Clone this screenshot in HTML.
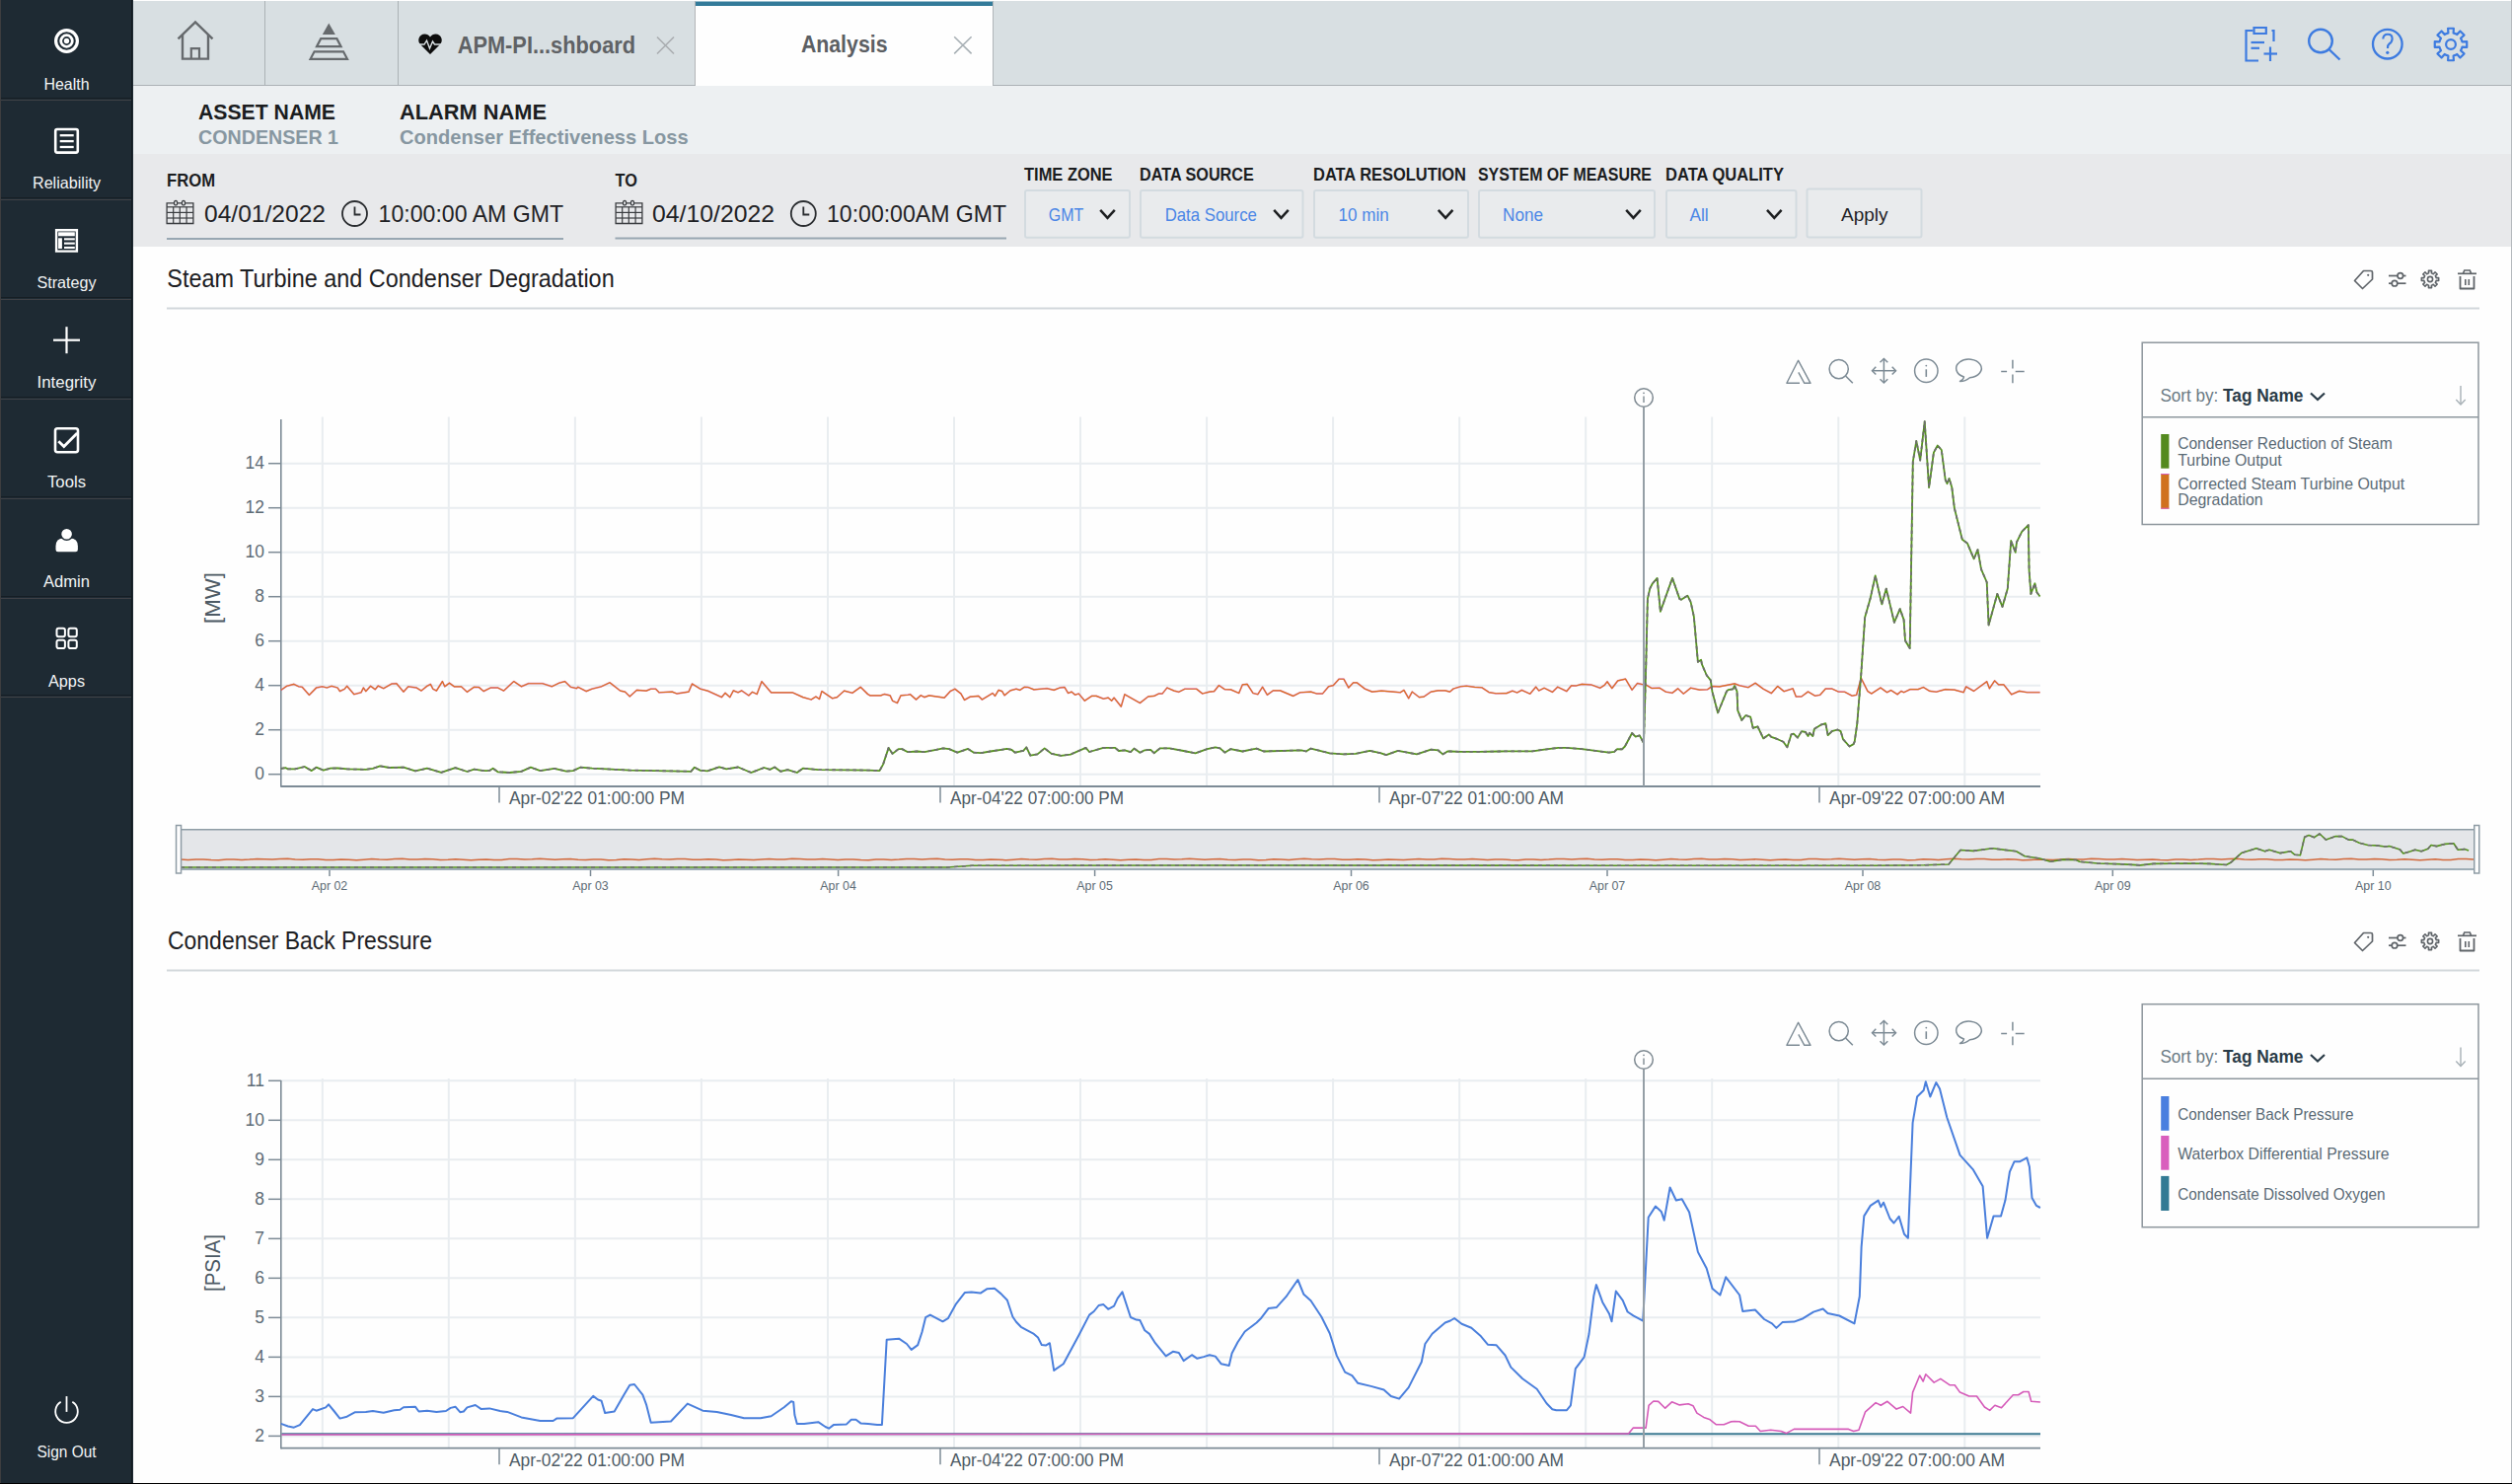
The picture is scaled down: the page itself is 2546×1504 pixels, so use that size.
<!DOCTYPE html>
<html><head><meta charset="utf-8"><title>Analysis</title>
<style>
html,body{margin:0;padding:0;background:#fefefe;overflow:hidden;}
body{width:2546px;height:1504px;position:relative;font-family:"Liberation Sans", sans-serif;}
svg{position:absolute;left:0;top:0;display:block;}
svg text{font-family:"Liberation Sans", sans-serif;}
</style></head>
<body>
<svg width="2546" height="1504" viewBox="0 0 2546 1504">
<rect x="0" y="0" width="2546" height="1504" fill="#fefefe"/>
<rect x="135" y="1" width="2410" height="85" fill="#d8dfe2"/>
<line x1="135" y1="86.5" x2="2545" y2="86.5" stroke="#acb2b6" stroke-width="1"/>
<rect x="135" y="87" width="2410" height="69" fill="#edf0f2"/>
<rect x="135" y="156" width="2410" height="94" fill="#e8e9eb"/>
<rect x="0" y="0" width="135" height="1504" fill="#1e2a33"/>
<line x1="0.5" y1="0" x2="0.5" y2="1504" stroke="#3d3d3f" stroke-width="1"/>
<line x1="133.5" y1="0" x2="133.5" y2="1504" stroke="#121a20" stroke-width="1"/>
<line x1="1" y1="99.5" x2="133" y2="99.5" stroke="#161e24" stroke-width="1"/>
<line x1="1" y1="101.5" x2="133" y2="101.5" stroke="#3f4146" stroke-width="1"/>
<line x1="1" y1="200.5" x2="133" y2="200.5" stroke="#161e24" stroke-width="1"/>
<line x1="1" y1="202.5" x2="133" y2="202.5" stroke="#3f4146" stroke-width="1"/>
<line x1="1" y1="301.5" x2="133" y2="301.5" stroke="#161e24" stroke-width="1"/>
<line x1="1" y1="303.5" x2="133" y2="303.5" stroke="#3f4146" stroke-width="1"/>
<line x1="1" y1="402.5" x2="133" y2="402.5" stroke="#161e24" stroke-width="1"/>
<line x1="1" y1="404.5" x2="133" y2="404.5" stroke="#3f4146" stroke-width="1"/>
<line x1="1" y1="503.5" x2="133" y2="503.5" stroke="#161e24" stroke-width="1"/>
<line x1="1" y1="505.5" x2="133" y2="505.5" stroke="#3f4146" stroke-width="1"/>
<line x1="1" y1="604.5" x2="133" y2="604.5" stroke="#161e24" stroke-width="1"/>
<line x1="1" y1="606.5" x2="133" y2="606.5" stroke="#3f4146" stroke-width="1"/>
<line x1="1" y1="704.5" x2="133" y2="704.5" stroke="#161e24" stroke-width="1"/>
<line x1="1" y1="706.5" x2="133" y2="706.5" stroke="#3f4146" stroke-width="1"/>
<line x1="2545.5" y1="0" x2="2545.5" y2="1504" stroke="#b5b9bd" stroke-width="1"/>
<line x1="0" y1="1503.5" x2="2546" y2="1503.5" stroke="#000000" stroke-width="1"/>
<text x="67.5" y="90.6" font-size="16.5" fill="#f2f4f5" text-anchor="middle" textLength="46.0" lengthAdjust="spacingAndGlyphs">Health</text>
<text x="67.5" y="191.4" font-size="16.5" fill="#f2f4f5" text-anchor="middle" textLength="69.0" lengthAdjust="spacingAndGlyphs">Reliability</text>
<text x="67.5" y="292.3" font-size="16.5" fill="#f2f4f5" text-anchor="middle" textLength="60.0" lengthAdjust="spacingAndGlyphs">Strategy</text>
<text x="67.5" y="393.1" font-size="16.5" fill="#f2f4f5" text-anchor="middle" textLength="60.0" lengthAdjust="spacingAndGlyphs">Integrity</text>
<text x="67.5" y="493.9" font-size="16.5" fill="#f2f4f5" text-anchor="middle" textLength="39.0" lengthAdjust="spacingAndGlyphs">Tools</text>
<text x="67.5" y="594.8" font-size="16.5" fill="#f2f4f5" text-anchor="middle" textLength="47.0" lengthAdjust="spacingAndGlyphs">Admin</text>
<text x="67.5" y="695.6" font-size="16.5" fill="#f2f4f5" text-anchor="middle" textLength="37.0" lengthAdjust="spacingAndGlyphs">Apps</text>
<circle cx="67.5" cy="41.5" r="10.9" stroke="#fff" stroke-width="3.2" fill="none"/>
<circle cx="67.5" cy="41.5" r="5.8" stroke="#fff" stroke-width="2.8" fill="none"/>
<circle cx="67.5" cy="41.5" r="2.7" stroke="none" stroke-width="1" fill="#fff"/>
<path d="M58.0,131.0 h19 a1.8,1.8 0 0 1 1.8,1.8 v20 a1.8,1.8 0 0 1 -1.8,1.8 h-19 a1.8,1.8 0 0 1 -1.8,-1.8 v-20 a1.8,1.8 0 0 1 1.8,-1.8 z" stroke="#fff" stroke-width="2.6" fill="none"/>
<line x1="60.7" y1="137.20000000000002" x2="74.7" y2="137.20000000000002" stroke="#fff" stroke-width="2.3"/>
<line x1="60.7" y1="143.10000000000002" x2="74.7" y2="143.10000000000002" stroke="#fff" stroke-width="2.3"/>
<line x1="60.7" y1="149.0" x2="74.7" y2="149.0" stroke="#fff" stroke-width="2.3"/>
<path d="M57.1,233.3 H77.9 V254.6 H57.1 Z" stroke="#fff" stroke-width="2.4" fill="none"/>
<rect x="59.1" y="235.3" width="16.7" height="4" fill="#fff"/>
<rect x="59.1" y="241.3" width="3.8" height="10.7" fill="#fff"/>
<rect x="65" y="241.3" width="10.8" height="2.1" fill="#fff"/>
<rect x="65" y="245.6" width="10.8" height="2.1" fill="#fff"/>
<rect x="65" y="249.9" width="10.8" height="2.1" fill="#fff"/>
<line x1="54.0" y1="344.7" x2="81.0" y2="344.7" stroke="#fff" stroke-width="2.2"/>
<line x1="67.5" y1="331.2" x2="67.5" y2="358.2" stroke="#fff" stroke-width="2.2"/>
<path d="M58.2,434.2 H76.8 A2.2,2.2 0 0 1 79,436.4 V456 A2.2,2.2 0 0 1 76.8,458.2 H58.2 A2.2,2.2 0 0 1 56,456 V436.4 A2.2,2.2 0 0 1 58.2,434.2 Z" stroke="#fff" stroke-width="2.6" fill="none"/>
<path d="M59.3,447.3 L64.8,452.6 L78.2,439" stroke="#fff" stroke-width="2.8" fill="none"/>
<path d="M56.5,557 V553.5 Q56.5,545.5 64.5,545.5 H70.9 Q78.9,545.5 78.9,553.5 V557 Q78.9,559.3 76.6,559.3 H58.8 Q56.5,559.3 56.5,557 Z" stroke="none" stroke-width="1" fill="#fff"/>
<circle cx="67.6" cy="541.2" r="6.1" stroke="#1e2a33" stroke-width="1.6" fill="#fff"/>
<path d="M59.400000000000006,636.8 h4.6 a1.9,1.9 0 0 1 1.9,1.9 v4.6 a1.9,1.9 0 0 1 -1.9,1.9 h-4.6 a1.9,1.9 0 0 1 -1.9,-1.9 v-4.6 a1.9,1.9 0 0 1 1.9,-1.9 z" stroke="#fff" stroke-width="2" fill="none"/>
<path d="M59.400000000000006,648.6999999999999 h4.6 a1.9,1.9 0 0 1 1.9,1.9 v4.6 a1.9,1.9 0 0 1 -1.9,1.9 h-4.6 a1.9,1.9 0 0 1 -1.9,-1.9 v-4.6 a1.9,1.9 0 0 1 1.9,-1.9 z" stroke="#fff" stroke-width="2" fill="none"/>
<path d="M71.3,636.8 h4.6 a1.9,1.9 0 0 1 1.9,1.9 v4.6 a1.9,1.9 0 0 1 -1.9,1.9 h-4.6 a1.9,1.9 0 0 1 -1.9,-1.9 v-4.6 a1.9,1.9 0 0 1 1.9,-1.9 z" stroke="#fff" stroke-width="2" fill="none"/>
<path d="M71.3,648.6999999999999 h4.6 a1.9,1.9 0 0 1 1.9,1.9 v4.6 a1.9,1.9 0 0 1 -1.9,1.9 h-4.6 a1.9,1.9 0 0 1 -1.9,-1.9 v-4.6 a1.9,1.9 0 0 1 1.9,-1.9 z" stroke="#fff" stroke-width="2" fill="none"/>
<path d="M61.7,1420.8 A11.3,11.3 0 1 0 73.3,1420.8" stroke="#fff" stroke-width="1.8" fill="none"/>
<line x1="67.5" y1="1415.1" x2="67.5" y2="1430.8999999999999" stroke="#fff" stroke-width="1.8"/>
<text x="67.5" y="1477.0" font-size="16.5" fill="#f2f4f5" text-anchor="middle" textLength="60.0" lengthAdjust="spacingAndGlyphs">Sign Out</text>
<line x1="268.5" y1="1" x2="268.5" y2="86" stroke="#acb2b6" stroke-width="1"/>
<line x1="403.5" y1="1" x2="403.5" y2="86" stroke="#acb2b6" stroke-width="1"/>
<line x1="704.5" y1="1" x2="704.5" y2="86" stroke="#b3b4b7" stroke-width="1"/>
<rect x="705" y="1" width="301" height="86" fill="#fefefe"/>
<rect x="705" y="1.5" width="301" height="4.5" fill="#337b9a"/>
<line x1="1006.5" y1="1" x2="1006.5" y2="86" stroke="#b0b5b8" stroke-width="1"/>
<path d="M180.5,39.3 L198,22.3 L215.5,39.3" stroke="#666a6d" stroke-width="2.4" fill="none"/>
<path d="M185,35 V59.6 H211 V35" stroke="#666a6d" stroke-width="2.4" fill="none"/>
<path d="M193.8,59.6 V49.2 H202 V59.6" stroke="#666a6d" stroke-width="2.2" fill="none"/>
<path d="M333.3,23.6 L339.8,34.9 H326.8 Z" stroke="none" stroke-width="1" fill="#666a6d"/>
<path d="M325.2,39.2 H341.4 L345.6,47.2 H321 Z" stroke="#666a6d" stroke-width="2.2" fill="none"/>
<path d="M318.6,52.3 H348 L352,59.8 H314.6 Z" stroke="#666a6d" stroke-width="2.2" fill="none"/>
<path d="M436,55 L426.5,45.5 Q423.5,42.5 424.5,39 Q426,34.5 430.5,34.5 Q434,34.5 436,37.5 Q438,34.5 441.5,34.5 Q446,34.5 447.5,39 Q448.5,42.5 445.5,45.5 Z" stroke="none" stroke-width="1" fill="#0d0d0d"/>
<path d="M425,45 H430 L432.5,41 L435.5,49 L438.5,42 L440.5,45 H447" stroke="#d8dfe2" stroke-width="1.4" fill="none"/>
<text x="463.7" y="53.5" font-size="23.5" fill="#5f6265" font-weight="bold" textLength="180.4" lengthAdjust="spacingAndGlyphs">APM-PI...shboard</text>
<path d="M666,37.5 L683,54.5 M683,37.5 L666,54.5" stroke="#a9adb0" stroke-width="1.6" fill="none"/>
<text x="811.9" y="53.3" font-size="23.5" fill="#5c5f63" font-weight="bold" textLength="87.6" lengthAdjust="spacingAndGlyphs">Analysis</text>
<path d="M967.2,37.3 L984.6,54.4 M984.6,37.3 L967.2,54.4" stroke="#a8b0b5" stroke-width="1.6" fill="none"/>
<path d="M2283.5,31 H2276.5 V61.5 H2289" stroke="#3d7be0" stroke-width="2.2" fill="none"/>
<path d="M2302.5,31 H2304.5 V42" stroke="#3d7be0" stroke-width="2.2" fill="none"/>
<path d="M2284.5,28 H2296.8 V34 H2284.5 Z" stroke="#3d7be0" stroke-width="2.2" fill="none"/>
<line x1="2281.5" y1="43" x2="2295" y2="43" stroke="#3d7be0" stroke-width="2.2"/>
<line x1="2281.5" y1="48.8" x2="2290" y2="48.8" stroke="#3d7be0" stroke-width="2.2"/>
<line x1="2294.5" y1="54.5" x2="2308" y2="54.5" stroke="#3d7be0" stroke-width="2.2"/>
<line x1="2301" y1="47.5" x2="2301" y2="62" stroke="#3d7be0" stroke-width="2.2"/>
<circle cx="2352" cy="41.5" r="11.8" stroke="#3d7be0" stroke-width="2.4" fill="none"/>
<line x1="2360.5" y1="50" x2="2371.5" y2="60.5" stroke="#3d7be0" stroke-width="2.4"/>
<circle cx="2419.8" cy="44.7" r="14.8" stroke="#3d7be0" stroke-width="2.3" fill="none"/>
<path d="M2415.3,39.5 Q2415.5,34.8 2420,34.8 Q2424.6,34.8 2424.6,39.2 Q2424.6,42.5 2421.5,44.5 Q2420,45.5 2420,49" stroke="#3d7be0" stroke-width="2.1" fill="none"/>
<circle cx="2419.8" cy="53.3" r="1.6" stroke="none" stroke-width="1" fill="#3d7be0"/>
<path d="M2479.48,34.10 L2481.38,33.49 L2481.10,28.76 L2486.90,28.76 L2486.62,33.49 L2488.52,34.10 L2490.28,35.01 L2493.43,31.46 L2497.54,35.57 L2493.99,38.72 L2494.90,40.48 L2495.51,42.38 L2500.24,42.10 L2500.24,47.90 L2495.51,47.62 L2494.90,49.52 L2493.99,51.28 L2497.54,54.43 L2493.43,58.54 L2490.28,54.99 L2488.52,55.90 L2486.62,56.51 L2486.90,61.24 L2481.10,61.24 L2481.38,56.51 L2479.48,55.90 L2477.72,54.99 L2474.57,58.54 L2470.46,54.43 L2474.01,51.28 L2473.10,49.52 L2472.49,47.62 L2467.76,47.90 L2467.76,42.10 L2472.49,42.38 L2473.10,40.48 L2474.01,38.72 L2470.46,35.57 L2474.57,31.46 L2477.72,35.01 Z" stroke="#3d7be0" stroke-width="2.2" fill="none" stroke-linejoin="round"/>
<circle cx="2484" cy="45" r="4.9" stroke="#3d7be0" stroke-width="2.2" fill="none"/>
<text x="201.0" y="120.8" font-size="22.5" fill="#1b1d1f" font-weight="bold" textLength="139.0" lengthAdjust="spacingAndGlyphs">ASSET NAME</text>
<text x="201.0" y="146.0" font-size="21" fill="#8797a1" font-weight="bold" textLength="142.0" lengthAdjust="spacingAndGlyphs">CONDENSER 1</text>
<text x="405.0" y="120.8" font-size="22.5" fill="#1b1d1f" font-weight="bold" textLength="149.0" lengthAdjust="spacingAndGlyphs">ALARM NAME</text>
<text x="405.0" y="146.0" font-size="21" fill="#8797a1" font-weight="bold" textLength="292.7" lengthAdjust="spacingAndGlyphs">Condenser Effectiveness Loss</text>
<text x="169.0" y="189.0" font-size="18" fill="#1b1d1f" font-weight="bold" textLength="49.0" lengthAdjust="spacingAndGlyphs">FROM</text>
<path d="M169.1,205.9 H195.9 V226.5 H169.1 Z" stroke="#3a3d40" stroke-width="1.3" fill="none"/>
<line x1="169.1" y1="209.8" x2="195.9" y2="209.8" stroke="#3a3d40" stroke-width="1.2"/>
<line x1="169.1" y1="215.4" x2="195.9" y2="215.4" stroke="#3a3d40" stroke-width="1.2"/>
<line x1="169.1" y1="221.0" x2="195.9" y2="221.0" stroke="#3a3d40" stroke-width="1.2"/>
<line x1="175.7" y1="209.8" x2="175.7" y2="226.5" stroke="#3a3d40" stroke-width="1.2"/>
<line x1="182.3" y1="209.8" x2="182.3" y2="226.5" stroke="#3a3d40" stroke-width="1.2"/>
<line x1="189.1" y1="209.8" x2="189.1" y2="226.5" stroke="#3a3d40" stroke-width="1.2"/>
<ellipse cx="178.1" cy="205.7" rx="1.6" ry="2.3" stroke="#3a3d40" stroke-width="1.2" fill="#e8e9eb"/>
<ellipse cx="186.0" cy="205.7" rx="1.6" ry="2.3" stroke="#3a3d40" stroke-width="1.2" fill="#e8e9eb"/>
<text x="207.0" y="224.7" font-size="24.3" fill="#1f2225" textLength="123.0" lengthAdjust="spacingAndGlyphs">04/01/2022</text>
<circle cx="359.5" cy="216.5" r="12.5" stroke="#2a2d30" stroke-width="1.8" fill="none"/>
<path d="M359.5,209.5 V217.5 H365.5" stroke="#2a2d30" stroke-width="1.8" fill="none"/>
<text x="383.6" y="224.7" font-size="24.3" fill="#1f2225" textLength="187.4" lengthAdjust="spacingAndGlyphs">10:00:00 AM GMT</text>
<line x1="169" y1="242" x2="571" y2="242" stroke="#98a7b2" stroke-width="2"/>
<text x="623.5" y="189.0" font-size="18" fill="#1b1d1f" font-weight="bold" textLength="22.4" lengthAdjust="spacingAndGlyphs">TO</text>
<path d="M624.1,205.9 H650.9 V226.5 H624.1 Z" stroke="#3a3d40" stroke-width="1.3" fill="none"/>
<line x1="624.1" y1="209.8" x2="650.9" y2="209.8" stroke="#3a3d40" stroke-width="1.2"/>
<line x1="624.1" y1="215.4" x2="650.9" y2="215.4" stroke="#3a3d40" stroke-width="1.2"/>
<line x1="624.1" y1="221.0" x2="650.9" y2="221.0" stroke="#3a3d40" stroke-width="1.2"/>
<line x1="630.7" y1="209.8" x2="630.7" y2="226.5" stroke="#3a3d40" stroke-width="1.2"/>
<line x1="637.3" y1="209.8" x2="637.3" y2="226.5" stroke="#3a3d40" stroke-width="1.2"/>
<line x1="644.1" y1="209.8" x2="644.1" y2="226.5" stroke="#3a3d40" stroke-width="1.2"/>
<ellipse cx="633.1" cy="205.7" rx="1.6" ry="2.3" stroke="#3a3d40" stroke-width="1.2" fill="#e8e9eb"/>
<ellipse cx="641.0" cy="205.7" rx="1.6" ry="2.3" stroke="#3a3d40" stroke-width="1.2" fill="#e8e9eb"/>
<text x="661.0" y="224.7" font-size="24.3" fill="#1f2225" textLength="124.0" lengthAdjust="spacingAndGlyphs">04/10/2022</text>
<circle cx="814.3" cy="216.5" r="12.5" stroke="#2a2d30" stroke-width="1.8" fill="none"/>
<path d="M814.3,209.5 V217.5 H820.3" stroke="#2a2d30" stroke-width="1.8" fill="none"/>
<text x="838.0" y="224.7" font-size="24.3" fill="#1f2225" textLength="182.0" lengthAdjust="spacingAndGlyphs">10:00:00AM GMT</text>
<line x1="623.5" y1="241.5" x2="1020" y2="241.5" stroke="#98a7b2" stroke-width="2"/>
<text x="1038.0" y="182.9" font-size="18" fill="#1b1d1f" font-weight="bold" textLength="89.6" lengthAdjust="spacingAndGlyphs">TIME ZONE</text>
<rect x="1039" y="193" width="106" height="47.8" rx="2" fill="#e9ebed" stroke="#d3dbe0" stroke-width="2"/>
<text x="1062.8" y="223.9" font-size="19" fill="#4a86e6" textLength="35.5" lengthAdjust="spacingAndGlyphs">GMT</text>
<path d="M1115.2,212.8 L1122.5,220.8 L1129.8,212.8" stroke="#1d1f21" stroke-width="2.5" fill="none"/>
<text x="1155.0" y="182.9" font-size="18" fill="#1b1d1f" font-weight="bold" textLength="115.8" lengthAdjust="spacingAndGlyphs">DATA SOURCE</text>
<rect x="1156" y="193" width="164.5" height="47.8" rx="2" fill="#e9ebed" stroke="#d3dbe0" stroke-width="2"/>
<text x="1180.7" y="223.9" font-size="19" fill="#4a86e6" textLength="93.2" lengthAdjust="spacingAndGlyphs">Data Source</text>
<path d="M1291.2,212.8 L1298.5,220.8 L1305.8,212.8" stroke="#1d1f21" stroke-width="2.5" fill="none"/>
<text x="1331.0" y="182.9" font-size="18" fill="#1b1d1f" font-weight="bold" textLength="155.0" lengthAdjust="spacingAndGlyphs">DATA RESOLUTION</text>
<rect x="1332" y="193" width="156" height="47.8" rx="2" fill="#e9ebed" stroke="#d3dbe0" stroke-width="2"/>
<text x="1356.5" y="223.9" font-size="19" fill="#4a86e6" textLength="51.2" lengthAdjust="spacingAndGlyphs">10 min</text>
<path d="M1457.8,212.8 L1465.1,220.8 L1472.3999999999999,212.8" stroke="#1d1f21" stroke-width="2.5" fill="none"/>
<text x="1498.0" y="182.9" font-size="18" fill="#1b1d1f" font-weight="bold" textLength="176.0" lengthAdjust="spacingAndGlyphs">SYSTEM OF MEASURE</text>
<rect x="1499" y="193" width="178" height="47.8" rx="2" fill="#e9ebed" stroke="#d3dbe0" stroke-width="2"/>
<text x="1523.0" y="223.9" font-size="19" fill="#4a86e6" textLength="41.0" lengthAdjust="spacingAndGlyphs">None</text>
<path d="M1648.2,212.8 L1655.5,220.8 L1662.8,212.8" stroke="#1d1f21" stroke-width="2.5" fill="none"/>
<text x="1688.0" y="182.9" font-size="18" fill="#1b1d1f" font-weight="bold" textLength="120.0" lengthAdjust="spacingAndGlyphs">DATA QUALITY</text>
<rect x="1689" y="193" width="131.5" height="47.8" rx="2" fill="#e9ebed" stroke="#d3dbe0" stroke-width="2"/>
<text x="1712.5" y="223.9" font-size="19" fill="#4a86e6" textLength="19.2" lengthAdjust="spacingAndGlyphs">All</text>
<path d="M1791,212.8 L1798.3,220.8 L1805.6,212.8" stroke="#1d1f21" stroke-width="2.5" fill="none"/>
<rect x="1831.5" y="191.5" width="116" height="49" rx="2" fill="#e9ebed" stroke="#d3dbe0" stroke-width="2"/>
<text x="1866.0" y="223.8" font-size="19" fill="#1f2225" textLength="47.5" lengthAdjust="spacingAndGlyphs">Apply</text>
<text x="169.3" y="291.2" font-size="25" fill="#1d2023" textLength="453.4" lengthAdjust="spacingAndGlyphs">Steam Turbine and Condenser Degradation</text>
<line x1="169" y1="312.5" x2="2513" y2="312.5" stroke="#d2d7db" stroke-width="2"/>
<path d="M2395.5,274.5 H2403 Q2404.5,274.5 2404.5,276 V283 L2394.5,292.5 L2386.5,284.5 Z" stroke="#5f6469" stroke-width="1.7" fill="none" stroke-linejoin="round"/>
<circle cx="2400.2" cy="278.8" r="1.1" stroke="none" stroke-width="1" fill="#5f6469"/>
<line x1="2421" y1="279.5" x2="2438.5" y2="279.5" stroke="#5f6469" stroke-width="1.7"/>
<line x1="2421" y1="287.2" x2="2438.5" y2="287.2" stroke="#5f6469" stroke-width="1.7"/>
<circle cx="2432.8" cy="279.5" r="2.8" stroke="#5f6469" stroke-width="1.7" fill="#fefefe"/>
<circle cx="2427" cy="287.2" r="2.8" stroke="#5f6469" stroke-width="1.7" fill="#fefefe"/>
<path d="M2460.59,277.18 L2461.60,276.86 L2461.45,274.34 L2464.55,274.34 L2464.40,276.86 L2465.41,277.18 L2466.35,277.67 L2468.03,275.78 L2470.22,277.97 L2468.33,279.65 L2468.82,280.59 L2469.14,281.60 L2471.66,281.45 L2471.66,284.55 L2469.14,284.40 L2468.82,285.41 L2468.33,286.35 L2470.22,288.03 L2468.03,290.22 L2466.35,288.33 L2465.41,288.82 L2464.40,289.14 L2464.55,291.66 L2461.45,291.66 L2461.60,289.14 L2460.59,288.82 L2459.65,288.33 L2457.97,290.22 L2455.78,288.03 L2457.67,286.35 L2457.18,285.41 L2456.86,284.40 L2454.34,284.55 L2454.34,281.45 L2456.86,281.60 L2457.18,280.59 L2457.67,279.65 L2455.78,277.97 L2457.97,275.78 L2459.65,277.67 Z" stroke="#5f6469" stroke-width="1.6" fill="none" stroke-linejoin="round"/>
<circle cx="2463" cy="283" r="2.6" stroke="#5f6469" stroke-width="1.6" fill="none"/>
<line x1="2491" y1="277.3" x2="2510" y2="277.3" stroke="#5f6469" stroke-width="1.7"/>
<path d="M2496.5,277 L2497.8,274 H2503.3 L2504.5,277" stroke="#5f6469" stroke-width="1.7" fill="none"/>
<path d="M2493.5,280 V292.5 H2507.5 V280" stroke="#5f6469" stroke-width="1.8" fill="none" stroke-linejoin="round"/>
<line x1="2498.8" y1="283" x2="2498.8" y2="289" stroke="#5f6469" stroke-width="1.6"/>
<line x1="2502.3" y1="283" x2="2502.3" y2="289" stroke="#5f6469" stroke-width="1.6"/>
<path d="M1824,388.3 H1810.9 L1822.6,365.3 L1835,388.3 H1828.8 L1822.8,377.3" stroke="#7d8b95" stroke-width="1.4" fill="none" stroke-linejoin="round"/>
<circle cx="1863.7" cy="374.1" r="9.6" stroke="#7d8b95" stroke-width="1.5" fill="none"/>
<line x1="1870.8" y1="381.2" x2="1877.8" y2="388.3" stroke="#7d8b95" stroke-width="1.6"/>
<line x1="1897.5" y1="375.7" x2="1921.5" y2="375.7" stroke="#7d8b95" stroke-width="1.5"/>
<line x1="1909.4" y1="363.5" x2="1909.4" y2="388" stroke="#7d8b95" stroke-width="1.5"/>
<path d="M1901.3,371.8 L1897.5,375.7 L1901.3,379.6" stroke="#7d8b95" stroke-width="1.5" fill="none"/>
<path d="M1917.7,371.8 L1921.5,375.7 L1917.7,379.6" stroke="#7d8b95" stroke-width="1.5" fill="none"/>
<path d="M1905.5,367.3 L1909.4,363.5 L1913.3,367.3" stroke="#7d8b95" stroke-width="1.5" fill="none"/>
<path d="M1905.5,384.2 L1909.4,388 L1913.3,384.2" stroke="#7d8b95" stroke-width="1.5" fill="none"/>
<circle cx="1952.3" cy="375.7" r="11.7" stroke="#7d8b95" stroke-width="1.5" fill="none"/>
<line x1="1952.3" y1="374.3" x2="1952.3" y2="381.9" stroke="#7d8b95" stroke-width="1.6"/>
<circle cx="1952.3" cy="370.6" r="0.9" stroke="none" stroke-width="1" fill="#7d8b95"/>
<path d="M1990.5,382 A12.8,9.3 0 1 1 1996.5,382.7 Q1992,386.5 1986.5,386.5 Q1990,385 1990.5,382 Z" stroke="#7d8b95" stroke-width="1.5" fill="none" stroke-linejoin="round"/>
<line x1="2028.2" y1="376.5" x2="2034.1" y2="376.5" stroke="#7d8b95" stroke-width="1.5"/>
<line x1="2042.7" y1="376.5" x2="2051.7" y2="376.5" stroke="#7d8b95" stroke-width="1.5"/>
<line x1="2039.9" y1="364.8" x2="2039.9" y2="373.4" stroke="#7d8b95" stroke-width="1.5"/>
<line x1="2039.9" y1="379.6" x2="2039.9" y2="388.3" stroke="#7d8b95" stroke-width="1.5"/>
<rect x="2171.2" y="347.2" width="340.8" height="184.3" fill="#fefefe" stroke="#8e979d" stroke-width="1.5"/>
<line x1="2171.2" y1="422.7" x2="2512" y2="422.7" stroke="#8e979d" stroke-width="1.5"/>
<text x="2189.4" y="406.5" font-size="17.5" fill="#6b7a84" textLength="59.0" lengthAdjust="spacingAndGlyphs">Sort by:</text>
<text x="2253.0" y="406.5" font-size="17.5" fill="#2a3b47" font-weight="bold" textLength="81.5" lengthAdjust="spacingAndGlyphs">Tag Name</text>
<path d="M2342,398.5 L2349,405 L2356,398.5" stroke="#2a3b47" stroke-width="2.2" fill="none"/>
<line x1="2494" y1="391" x2="2494" y2="410" stroke="#a7b0b6" stroke-width="1.4"/>
<path d="M2489.3,405 L2494,410 L2498.7,405" stroke="#a7b0b6" stroke-width="1.4" fill="none"/>
<rect x="2190.2" y="440" width="8.2" height="34.69999999999999" fill="#548a1f"/>
<text x="2207.2" y="455.3" font-size="16.2" fill="#5b6b76" textLength="217.6" lengthAdjust="spacingAndGlyphs">Condenser Reduction of Steam</text>
<text x="2207.2" y="471.9" font-size="16.2" fill="#5b6b76" textLength="105.5" lengthAdjust="spacingAndGlyphs">Turbine Output</text>
<rect x="2190.2" y="480" width="8.2" height="35.700000000000045" fill="#d0711e"/>
<text x="2207.2" y="495.5" font-size="16.2" fill="#5b6b76" textLength="230.0" lengthAdjust="spacingAndGlyphs">Corrected Steam Turbine Output</text>
<text x="2207.2" y="512.0" font-size="16.2" fill="#5b6b76" textLength="86.5" lengthAdjust="spacingAndGlyphs">Degradation</text>
<rect x="2190.2" y="480" width="8.2" height="1" fill="#d95fbd"/><rect x="2190.2" y="514.7" width="8.2" height="1" fill="#d95fbd"/>
<line x1="285" y1="784.7" x2="2068" y2="784.7" stroke="#e9edf0" stroke-width="2"/>
<line x1="285" y1="739.7" x2="2068" y2="739.7" stroke="#e9edf0" stroke-width="2"/>
<line x1="285" y1="694.7" x2="2068" y2="694.7" stroke="#e9edf0" stroke-width="2"/>
<line x1="285" y1="649.7" x2="2068" y2="649.7" stroke="#e9edf0" stroke-width="2"/>
<line x1="285" y1="604.7" x2="2068" y2="604.7" stroke="#e9edf0" stroke-width="2"/>
<line x1="285" y1="559.7" x2="2068" y2="559.7" stroke="#e9edf0" stroke-width="2"/>
<line x1="285" y1="514.7" x2="2068" y2="514.7" stroke="#e9edf0" stroke-width="2"/>
<line x1="285" y1="469.70000000000005" x2="2068" y2="469.70000000000005" stroke="#e9edf0" stroke-width="2"/>
<line x1="326.8" y1="422.5" x2="326.8" y2="797" stroke="#e9edf0" stroke-width="2"/>
<line x1="454.8" y1="422.5" x2="454.8" y2="797" stroke="#e9edf0" stroke-width="2"/>
<line x1="582.9" y1="422.5" x2="582.9" y2="797" stroke="#e9edf0" stroke-width="2"/>
<line x1="710.9" y1="422.5" x2="710.9" y2="797" stroke="#e9edf0" stroke-width="2"/>
<line x1="839.0" y1="422.5" x2="839.0" y2="797" stroke="#e9edf0" stroke-width="2"/>
<line x1="967.0" y1="422.5" x2="967.0" y2="797" stroke="#e9edf0" stroke-width="2"/>
<line x1="1095.0" y1="422.5" x2="1095.0" y2="797" stroke="#e9edf0" stroke-width="2"/>
<line x1="1223.1" y1="422.5" x2="1223.1" y2="797" stroke="#e9edf0" stroke-width="2"/>
<line x1="1351.1" y1="422.5" x2="1351.1" y2="797" stroke="#e9edf0" stroke-width="2"/>
<line x1="1479.2" y1="422.5" x2="1479.2" y2="797" stroke="#e9edf0" stroke-width="2"/>
<line x1="1607.2" y1="422.5" x2="1607.2" y2="797" stroke="#e9edf0" stroke-width="2"/>
<line x1="1735.2" y1="422.5" x2="1735.2" y2="797" stroke="#e9edf0" stroke-width="2"/>
<line x1="1863.3" y1="422.5" x2="1863.3" y2="797" stroke="#e9edf0" stroke-width="2"/>
<line x1="1991.3" y1="422.5" x2="1991.3" y2="797" stroke="#e9edf0" stroke-width="2"/>
<line x1="272" y1="784.7" x2="285" y2="784.7" stroke="#7d8b96" stroke-width="1.5"/>
<text x="268.0" y="790.3" font-size="17.5" fill="#5d6b75" text-anchor="end">0</text>
<line x1="272" y1="739.7" x2="285" y2="739.7" stroke="#7d8b96" stroke-width="1.5"/>
<text x="268.0" y="745.3" font-size="17.5" fill="#5d6b75" text-anchor="end">2</text>
<line x1="272" y1="694.7" x2="285" y2="694.7" stroke="#7d8b96" stroke-width="1.5"/>
<text x="268.0" y="700.3" font-size="17.5" fill="#5d6b75" text-anchor="end">4</text>
<line x1="272" y1="649.7" x2="285" y2="649.7" stroke="#7d8b96" stroke-width="1.5"/>
<text x="268.0" y="655.3" font-size="17.5" fill="#5d6b75" text-anchor="end">6</text>
<line x1="272" y1="604.7" x2="285" y2="604.7" stroke="#7d8b96" stroke-width="1.5"/>
<text x="268.0" y="610.3" font-size="17.5" fill="#5d6b75" text-anchor="end">8</text>
<line x1="272" y1="559.7" x2="285" y2="559.7" stroke="#7d8b96" stroke-width="1.5"/>
<text x="268.0" y="565.3" font-size="17.5" fill="#5d6b75" text-anchor="end">10</text>
<line x1="272" y1="514.7" x2="285" y2="514.7" stroke="#7d8b96" stroke-width="1.5"/>
<text x="268.0" y="520.3" font-size="17.5" fill="#5d6b75" text-anchor="end">12</text>
<line x1="272" y1="469.70000000000005" x2="285" y2="469.70000000000005" stroke="#7d8b96" stroke-width="1.5"/>
<text x="268.0" y="475.3" font-size="17.5" fill="#5d6b75" text-anchor="end">14</text>
<line x1="284.8" y1="425" x2="284.8" y2="797.8" stroke="#7d8b96" stroke-width="1.6"/>
<line x1="285" y1="797" x2="2068" y2="797" stroke="#7d8b96" stroke-width="1.8"/>
<text x="0" y="0" font-size="22" fill="#4d5a64" text-anchor="middle" textLength="52" lengthAdjust="spacingAndGlyphs" transform="translate(222.5,606) rotate(-90)">[MW]</text>
<path d="M284.8,699.4 L290.7,695.3 L297.9,693.4 L302.7,695.8 L306.3,696.3 L313.4,704.4 L320.6,697.0 L326.6,695.8 L331.3,697.0 L336.1,695.3 L342.1,697.0 L344.5,700.6 L349.3,698.2 L351.7,695.3 L358.8,703.7 L366.0,701.8 L368.4,697.0 L370.8,700.6 L375.5,695.3 L380.3,698.7 L383.2,695.1 L388.7,697.7 L397.0,693.0 L401.8,692.7 L409.0,701.1 L413.7,695.8 L422.1,697.0 L426.9,700.1 L432.9,695.3 L436.4,693.4 L438.8,698.2 L442.4,700.1 L448.4,690.6 L450.8,695.8 L455.5,692.2 L460.3,695.8 L467.5,695.8 L473.5,701.3 L480.6,696.3 L485.4,696.5 L490.2,700.6 L497.3,697.0 L504.5,697.0 L510.5,700.1 L516.4,694.6 L520.7,690.6 L528.4,695.8 L535.6,692.7 L549.9,692.7 L559.4,695.8 L566.6,692.2 L572.6,690.6 L578.5,696.3 L584.5,697.7 L585.7,696.3 L594.1,700.6 L600.0,698.2 L609.6,695.8 L618.0,691.8 L628.7,700.1 L633.5,701.1 L638.3,705.9 L645.4,699.4 L655.0,700.1 L659.7,698.2 L664.5,698.2 L668.1,701.8 L681.2,701.1 L686.0,703.0 L698.0,701.1 L701.5,693.0 L709.9,698.2 L717.1,700.1 L731.4,706.6 L735.0,702.3 L739.8,706.6 L743.3,699.9 L748.1,701.8 L751.7,699.9 L758.9,704.9 L762.4,701.3 L767.2,703.5 L772.0,690.6 L781.6,701.8 L803.0,701.8 L813.8,706.6 L822.2,709.0 L826.9,706.1 L830.5,708.5 L832.9,700.6 L843.6,707.8 L848.4,706.6 L855.6,700.1 L864.0,702.3 L872.3,696.3 L879.5,703.5 L881.9,704.9 L892.7,704.9 L896.3,703.5 L902.2,704.9 L904.6,710.2 L909.4,712.5 L913.0,704.9 L920.2,704.2 L922.5,703.7 L928.5,709.0 L933.3,704.7 L936.9,706.6 L941.7,704.9 L957.2,707.1 L963.1,700.6 L967.9,698.2 L973.9,703.0 L977.5,709.4 L983.4,706.1 L991.8,705.4 L995.4,709.0 L1006.1,702.5 L1008.5,705.4 L1012.1,699.4 L1015.7,700.6 L1018.1,704.7 L1024.0,699.9 L1030.0,698.2 L1033.6,699.4 L1038.4,696.3 L1042.0,696.5 L1047.9,698.9 L1061.1,697.7 L1068.2,699.4 L1074.2,697.0 L1079.0,696.5 L1082.6,702.5 L1086.1,701.1 L1089.7,704.2 L1093.3,703.0 L1099.3,710.2 L1106.4,705.4 L1111.2,705.4 L1118.4,708.2 L1123.2,707.1 L1126.7,710.2 L1129.1,707.1 L1136.3,716.1 L1139.9,703.7 L1147.0,707.8 L1155.4,712.5 L1163.8,705.9 L1169.7,705.4 L1174.5,703.0 L1178.1,703.0 L1182.9,697.0 L1190.0,700.1 L1194.8,701.3 L1200.8,698.2 L1212.7,698.2 L1218.7,703.0 L1225.9,701.1 L1230.6,700.6 L1235.4,694.6 L1241.4,698.7 L1247.4,698.9 L1255.7,702.5 L1259.3,693.9 L1264.1,693.4 L1270.0,702.5 L1274.8,703.7 L1279.6,696.3 L1284.4,704.2 L1290.3,699.9 L1297.5,699.9 L1310.6,705.4 L1317.8,701.8 L1328.6,701.1 L1334.5,703.0 L1340.5,703.0 L1346.5,695.8 L1351.3,694.6 L1357.2,688.2 L1362.0,688.2 L1366.8,697.0 L1371.6,691.8 L1375.1,691.8 L1383.5,698.2 L1390.7,701.1 L1400.2,700.1 L1412.2,701.1 L1419.3,701.8 L1422.9,699.4 L1427.7,707.8 L1431.3,701.1 L1438.4,706.6 L1443.2,706.1 L1450.4,701.1 L1457.5,699.9 L1464.7,699.9 L1469.5,701.1 L1473.1,698.0 L1480.3,695.8 L1486.3,695.2 L1494.6,696.4 L1501.8,696.8 L1509.0,701.6 L1516.1,702.8 L1526.9,702.6 L1532.9,700.2 L1537.6,702.0 L1542.4,699.4 L1550.8,703.2 L1556.7,696.2 L1559.7,700.0 L1565.1,697.3 L1573.5,701.4 L1578.8,696.2 L1587.8,700.6 L1592.6,694.9 L1597.3,695.0 L1603.3,693.4 L1612.9,694.0 L1621.8,697.3 L1626.0,694.6 L1629.0,690.8 L1633.8,697.6 L1639.7,689.9 L1647.5,688.1 L1654.1,699.2 L1659.5,692.5 L1665.4,693.8 L1667.8,693.7 L1674.0,697.5 L1682.1,697.2 L1688.5,701.2 L1695.0,702.3 L1700.7,697.8 L1706.3,703.1 L1713.6,697.2 L1722.5,699.1 L1730.6,698.8 L1735.4,695.5 L1742.7,695.9 L1758.1,692.9 L1762.9,694.7 L1771.8,696.7 L1779.1,692.3 L1787.2,698.3 L1795.3,702.6 L1801.7,695.5 L1808.2,700.7 L1817.1,697.8 L1820.3,706.0 L1826.0,705.9 L1832.5,701.0 L1839.7,705.2 L1844.6,704.3 L1850.3,698.0 L1856.7,698.0 L1863.2,701.0 L1869.7,701.2 L1876.9,705.1 L1878.4,704.9 L1881.6,704.3 L1886.3,687.3 L1892.9,700.4 L1896.8,703.0 L1906.0,697.0 L1912.6,701.7 L1916.5,699.6 L1923.1,703.8 L1927.0,700.4 L1929.6,701.7 L1936.2,698.6 L1944.1,698.6 L1949.4,696.5 L1955.9,700.4 L1962.5,701.2 L1971.7,698.6 L1980.9,699.1 L1990.1,701.7 L1992.7,695.9 L2000.6,700.4 L2013.7,690.7 L2016.4,697.8 L2021.6,689.9 L2025.6,693.8 L2030.8,693.8 L2038.7,703.8 L2046.6,700.4 L2054.5,701.7 L2067.6,701.7" stroke="#d95bb8" stroke-width="1.8" fill="none" stroke-linejoin="round" opacity="0.7"/>
<path d="M284.8,699.4 L290.7,695.3 L297.9,693.4 L302.7,695.8 L306.3,696.3 L313.4,704.4 L320.6,697.0 L326.6,695.8 L331.3,697.0 L336.1,695.3 L342.1,697.0 L344.5,700.6 L349.3,698.2 L351.7,695.3 L358.8,703.7 L366.0,701.8 L368.4,697.0 L370.8,700.6 L375.5,695.3 L380.3,698.7 L383.2,695.1 L388.7,697.7 L397.0,693.0 L401.8,692.7 L409.0,701.1 L413.7,695.8 L422.1,697.0 L426.9,700.1 L432.9,695.3 L436.4,693.4 L438.8,698.2 L442.4,700.1 L448.4,690.6 L450.8,695.8 L455.5,692.2 L460.3,695.8 L467.5,695.8 L473.5,701.3 L480.6,696.3 L485.4,696.5 L490.2,700.6 L497.3,697.0 L504.5,697.0 L510.5,700.1 L516.4,694.6 L520.7,690.6 L528.4,695.8 L535.6,692.7 L549.9,692.7 L559.4,695.8 L566.6,692.2 L572.6,690.6 L578.5,696.3 L584.5,697.7 L585.7,696.3 L594.1,700.6 L600.0,698.2 L609.6,695.8 L618.0,691.8 L628.7,700.1 L633.5,701.1 L638.3,705.9 L645.4,699.4 L655.0,700.1 L659.7,698.2 L664.5,698.2 L668.1,701.8 L681.2,701.1 L686.0,703.0 L698.0,701.1 L701.5,693.0 L709.9,698.2 L717.1,700.1 L731.4,706.6 L735.0,702.3 L739.8,706.6 L743.3,699.9 L748.1,701.8 L751.7,699.9 L758.9,704.9 L762.4,701.3 L767.2,703.5 L772.0,690.6 L781.6,701.8 L803.0,701.8 L813.8,706.6 L822.2,709.0 L826.9,706.1 L830.5,708.5 L832.9,700.6 L843.6,707.8 L848.4,706.6 L855.6,700.1 L864.0,702.3 L872.3,696.3 L879.5,703.5 L881.9,704.9 L892.7,704.9 L896.3,703.5 L902.2,704.9 L904.6,710.2 L909.4,712.5 L913.0,704.9 L920.2,704.2 L922.5,703.7 L928.5,709.0 L933.3,704.7 L936.9,706.6 L941.7,704.9 L957.2,707.1 L963.1,700.6 L967.9,698.2 L973.9,703.0 L977.5,709.4 L983.4,706.1 L991.8,705.4 L995.4,709.0 L1006.1,702.5 L1008.5,705.4 L1012.1,699.4 L1015.7,700.6 L1018.1,704.7 L1024.0,699.9 L1030.0,698.2 L1033.6,699.4 L1038.4,696.3 L1042.0,696.5 L1047.9,698.9 L1061.1,697.7 L1068.2,699.4 L1074.2,697.0 L1079.0,696.5 L1082.6,702.5 L1086.1,701.1 L1089.7,704.2 L1093.3,703.0 L1099.3,710.2 L1106.4,705.4 L1111.2,705.4 L1118.4,708.2 L1123.2,707.1 L1126.7,710.2 L1129.1,707.1 L1136.3,716.1 L1139.9,703.7 L1147.0,707.8 L1155.4,712.5 L1163.8,705.9 L1169.7,705.4 L1174.5,703.0 L1178.1,703.0 L1182.9,697.0 L1190.0,700.1 L1194.8,701.3 L1200.8,698.2 L1212.7,698.2 L1218.7,703.0 L1225.9,701.1 L1230.6,700.6 L1235.4,694.6 L1241.4,698.7 L1247.4,698.9 L1255.7,702.5 L1259.3,693.9 L1264.1,693.4 L1270.0,702.5 L1274.8,703.7 L1279.6,696.3 L1284.4,704.2 L1290.3,699.9 L1297.5,699.9 L1310.6,705.4 L1317.8,701.8 L1328.6,701.1 L1334.5,703.0 L1340.5,703.0 L1346.5,695.8 L1351.3,694.6 L1357.2,688.2 L1362.0,688.2 L1366.8,697.0 L1371.6,691.8 L1375.1,691.8 L1383.5,698.2 L1390.7,701.1 L1400.2,700.1 L1412.2,701.1 L1419.3,701.8 L1422.9,699.4 L1427.7,707.8 L1431.3,701.1 L1438.4,706.6 L1443.2,706.1 L1450.4,701.1 L1457.5,699.9 L1464.7,699.9 L1469.5,701.1 L1473.1,698.0 L1480.3,695.8 L1486.3,695.2 L1494.6,696.4 L1501.8,696.8 L1509.0,701.6 L1516.1,702.8 L1526.9,702.6 L1532.9,700.2 L1537.6,702.0 L1542.4,699.4 L1550.8,703.2 L1556.7,696.2 L1559.7,700.0 L1565.1,697.3 L1573.5,701.4 L1578.8,696.2 L1587.8,700.6 L1592.6,694.9 L1597.3,695.0 L1603.3,693.4 L1612.9,694.0 L1621.8,697.3 L1626.0,694.6 L1629.0,690.8 L1633.8,697.6 L1639.7,689.9 L1647.5,688.1 L1654.1,699.2 L1659.5,692.5 L1665.4,693.8 L1667.8,693.7 L1674.0,697.5 L1682.1,697.2 L1688.5,701.2 L1695.0,702.3 L1700.7,697.8 L1706.3,703.1 L1713.6,697.2 L1722.5,699.1 L1730.6,698.8 L1735.4,695.5 L1742.7,695.9 L1758.1,692.9 L1762.9,694.7 L1771.8,696.7 L1779.1,692.3 L1787.2,698.3 L1795.3,702.6 L1801.7,695.5 L1808.2,700.7 L1817.1,697.8 L1820.3,706.0 L1826.0,705.9 L1832.5,701.0 L1839.7,705.2 L1844.6,704.3 L1850.3,698.0 L1856.7,698.0 L1863.2,701.0 L1869.7,701.2 L1876.9,705.1 L1878.4,704.9 L1881.6,704.3 L1886.3,687.3 L1892.9,700.4 L1896.8,703.0 L1906.0,697.0 L1912.6,701.7 L1916.5,699.6 L1923.1,703.8 L1927.0,700.4 L1929.6,701.7 L1936.2,698.6 L1944.1,698.6 L1949.4,696.5 L1955.9,700.4 L1962.5,701.2 L1971.7,698.6 L1980.9,699.1 L1990.1,701.7 L1992.7,695.9 L2000.6,700.4 L2013.7,690.7 L2016.4,697.8 L2021.6,689.9 L2025.6,693.8 L2030.8,693.8 L2038.7,703.8 L2046.6,700.4 L2054.5,701.7 L2067.6,701.7" stroke="#d9701c" stroke-width="1.15" fill="none" stroke-linejoin="round"/>
<path d="M284.8,778.9 L289.6,778.2 L291.9,779.4 L299.1,779.4 L308.7,777.0 L315.8,781.1 L320.6,777.7 L327.8,780.6 L334.9,778.7 L342.1,778.5 L351.7,779.4 L370.8,779.9 L377.9,778.9 L385.1,776.3 L394.6,778.0 L409.0,777.7 L420.9,781.3 L432.9,778.7 L447.2,782.8 L461.5,778.2 L473.5,782.0 L480.6,779.7 L490.2,781.1 L496.1,781.1 L499.7,778.7 L504.5,782.3 L516.4,783.0 L528.4,781.8 L537.9,777.7 L547.5,781.1 L561.8,778.9 L573.8,781.6 L580.9,781.1 L588.1,777.7 L600.0,778.7 L638.3,780.6 L700.3,781.8 L703.9,777.7 L709.9,780.9 L717.1,781.3 L729.0,777.3 L736.2,779.4 L748.1,777.5 L761.3,783.0 L774.4,778.0 L780.4,779.9 L785.1,777.5 L791.1,781.8 L798.3,780.1 L807.8,783.0 L813.8,778.7 L829.3,780.1 L879.5,780.6 L891.5,781.1 L895.1,774.6 L900.6,757.9 L904.6,763.9 L910.6,759.1 L914.2,759.1 L920.2,762.2 L929.7,761.5 L936.9,762.2 L948.8,759.8 L956.0,758.4 L962.0,759.1 L970.3,762.7 L981.1,758.9 L987.0,762.7 L994.2,763.2 L1003.7,761.5 L1020.5,758.9 L1025.2,759.8 L1028.8,762.7 L1037.2,760.8 L1040.3,757.4 L1044.3,765.6 L1051.5,764.4 L1058.7,758.4 L1065.8,763.9 L1075.4,765.8 L1085.0,764.6 L1100.5,757.9 L1104.1,762.0 L1118.4,757.9 L1130.3,757.9 L1133.9,761.0 L1139.9,760.3 L1145.9,762.2 L1149.4,758.6 L1155.4,762.7 L1160.2,760.3 L1166.2,759.8 L1169.7,763.2 L1175.7,758.4 L1185.3,758.4 L1199.6,761.0 L1211.5,763.4 L1223.5,759.1 L1231.8,757.4 L1236.6,758.4 L1241.4,762.7 L1247.4,759.1 L1259.3,761.5 L1273.6,758.6 L1280.8,761.5 L1319.0,760.3 L1323.8,761.5 L1328.6,758.6 L1335.7,760.3 L1347.7,763.4 L1362.0,764.4 L1373.9,763.9 L1388.3,760.8 L1399.0,763.2 L1405.0,765.1 L1416.9,760.8 L1426.5,762.7 L1436.0,764.4 L1450.4,759.6 L1457.5,760.3 L1462.3,764.4 L1467.1,761.5 L1470.0,761.5 L1480.3,761.9 L1499.4,761.9 L1519.7,761.5 L1553.2,761.3 L1565.1,759.7 L1579.4,757.9 L1587.8,757.9 L1603.3,759.1 L1630.8,762.7 L1636.2,761.8 L1639.1,759.1 L1643.9,759.4 L1646.9,756.5 L1654.1,743.0 L1657.7,746.6 L1661.8,745.4 L1666.0,753.2 L1668.3,673.2 L1669.9,606.9 L1672.3,596.4 L1674.8,591.5 L1679.6,585.9 L1682.9,619.8 L1695.0,585.9 L1702.3,606.9 L1703.9,607.7 L1710.4,603.7 L1713.6,610.1 L1716.8,624.7 L1720.9,670.8 L1724.1,668.7 L1724.9,673.2 L1729.8,684.5 L1733.8,689.4 L1735.4,700.7 L1741.1,722.5 L1750.0,700.7 L1751.6,699.1 L1756.4,698.3 L1758.1,695.0 L1760.5,700.7 L1761.3,720.1 L1765.3,729.8 L1769.4,725.0 L1774.2,726.6 L1776.7,737.9 L1781.5,736.3 L1787.2,748.4 L1792.8,744.4 L1795.3,746.8 L1801.7,749.2 L1807.4,751.7 L1811.4,757.3 L1815.5,744.4 L1817.9,743.6 L1822.0,747.6 L1826.0,741.1 L1830.0,742.0 L1832.5,746.0 L1834.1,742.8 L1837.3,746.0 L1838.9,738.7 L1845.4,734.7 L1850.3,733.1 L1852.7,745.2 L1856.7,741.1 L1862.4,739.5 L1865.6,741.1 L1868.0,749.2 L1874.5,756.5 L1878.6,754.1 L1879.7,751.7 L1882.3,733.3 L1886.3,683.3 L1890.2,625.5 L1895.5,607.1 L1900.7,583.5 L1907.3,612.4 L1911.8,596.6 L1919.9,630.8 L1925.7,617.1 L1929.6,628.1 L1931.0,649.2 L1935.7,657.0 L1938.8,467.8 L1942.3,446.8 L1946.2,466.5 L1950.7,427.1 L1955.1,494.1 L1959.9,458.6 L1963.8,451.5 L1967.8,456.0 L1971.7,486.2 L1973.5,490.2 L1975.6,484.9 L1978.3,494.1 L1980.9,515.1 L1988.8,546.7 L1994.0,550.6 L2000.6,566.4 L2004.5,557.2 L2008.0,576.9 L2013.7,590.0 L2015.6,633.4 L2024.3,601.9 L2029.5,615.0 L2034.8,596.6 L2038.2,548.0 L2042.7,559.8 L2044.0,549.3 L2049.2,538.8 L2055.8,532.2 L2056.6,578.2 L2058.4,601.9 L2062.4,591.3 L2064.5,600.5 L2067.6,604.5" stroke="#55931f" stroke-width="1.8" fill="none" stroke-linejoin="round"/>
<path d="M284.8,778.9 L289.6,778.2 L291.9,779.4 L299.1,779.4 L308.7,777.0 L315.8,781.1 L320.6,777.7 L327.8,780.6 L334.9,778.7 L342.1,778.5 L351.7,779.4 L370.8,779.9 L377.9,778.9 L385.1,776.3 L394.6,778.0 L409.0,777.7 L420.9,781.3 L432.9,778.7 L447.2,782.8 L461.5,778.2 L473.5,782.0 L480.6,779.7 L490.2,781.1 L496.1,781.1 L499.7,778.7 L504.5,782.3 L516.4,783.0 L528.4,781.8 L537.9,777.7 L547.5,781.1 L561.8,778.9 L573.8,781.6 L580.9,781.1 L588.1,777.7 L600.0,778.7 L638.3,780.6 L700.3,781.8 L703.9,777.7 L709.9,780.9 L717.1,781.3 L729.0,777.3 L736.2,779.4 L748.1,777.5 L761.3,783.0 L774.4,778.0 L780.4,779.9 L785.1,777.5 L791.1,781.8 L798.3,780.1 L807.8,783.0 L813.8,778.7 L829.3,780.1 L879.5,780.6 L891.5,781.1 L895.1,774.6 L900.6,757.9 L904.6,763.9 L910.6,759.1 L914.2,759.1 L920.2,762.2 L929.7,761.5 L936.9,762.2 L948.8,759.8 L956.0,758.4 L962.0,759.1 L970.3,762.7 L981.1,758.9 L987.0,762.7 L994.2,763.2 L1003.7,761.5 L1020.5,758.9 L1025.2,759.8 L1028.8,762.7 L1037.2,760.8 L1040.3,757.4 L1044.3,765.6 L1051.5,764.4 L1058.7,758.4 L1065.8,763.9 L1075.4,765.8 L1085.0,764.6 L1100.5,757.9 L1104.1,762.0 L1118.4,757.9 L1130.3,757.9 L1133.9,761.0 L1139.9,760.3 L1145.9,762.2 L1149.4,758.6 L1155.4,762.7 L1160.2,760.3 L1166.2,759.8 L1169.7,763.2 L1175.7,758.4 L1185.3,758.4 L1199.6,761.0 L1211.5,763.4 L1223.5,759.1 L1231.8,757.4 L1236.6,758.4 L1241.4,762.7 L1247.4,759.1 L1259.3,761.5 L1273.6,758.6 L1280.8,761.5 L1319.0,760.3 L1323.8,761.5 L1328.6,758.6 L1335.7,760.3 L1347.7,763.4 L1362.0,764.4 L1373.9,763.9 L1388.3,760.8 L1399.0,763.2 L1405.0,765.1 L1416.9,760.8 L1426.5,762.7 L1436.0,764.4 L1450.4,759.6 L1457.5,760.3 L1462.3,764.4 L1467.1,761.5 L1470.0,761.5 L1480.3,761.9 L1499.4,761.9 L1519.7,761.5 L1553.2,761.3 L1565.1,759.7 L1579.4,757.9 L1587.8,757.9 L1603.3,759.1 L1630.8,762.7 L1636.2,761.8 L1639.1,759.1 L1643.9,759.4 L1646.9,756.5 L1654.1,743.0 L1657.7,746.6 L1661.8,745.4 L1666.0,753.2 L1668.3,673.2 L1669.9,606.9 L1672.3,596.4 L1674.8,591.5 L1679.6,585.9 L1682.9,619.8 L1695.0,585.9 L1702.3,606.9 L1703.9,607.7 L1710.4,603.7 L1713.6,610.1 L1716.8,624.7 L1720.9,670.8 L1724.1,668.7 L1724.9,673.2 L1729.8,684.5 L1733.8,689.4 L1735.4,700.7 L1741.1,722.5 L1750.0,700.7 L1751.6,699.1 L1756.4,698.3 L1758.1,695.0 L1760.5,700.7 L1761.3,720.1 L1765.3,729.8 L1769.4,725.0 L1774.2,726.6 L1776.7,737.9 L1781.5,736.3 L1787.2,748.4 L1792.8,744.4 L1795.3,746.8 L1801.7,749.2 L1807.4,751.7 L1811.4,757.3 L1815.5,744.4 L1817.9,743.6 L1822.0,747.6 L1826.0,741.1 L1830.0,742.0 L1832.5,746.0 L1834.1,742.8 L1837.3,746.0 L1838.9,738.7 L1845.4,734.7 L1850.3,733.1 L1852.7,745.2 L1856.7,741.1 L1862.4,739.5 L1865.6,741.1 L1868.0,749.2 L1874.5,756.5 L1878.6,754.1 L1879.7,751.7 L1882.3,733.3 L1886.3,683.3 L1890.2,625.5 L1895.5,607.1 L1900.7,583.5 L1907.3,612.4 L1911.8,596.6 L1919.9,630.8 L1925.7,617.1 L1929.6,628.1 L1931.0,649.2 L1935.7,657.0 L1938.8,467.8 L1942.3,446.8 L1946.2,466.5 L1950.7,427.1 L1955.1,494.1 L1959.9,458.6 L1963.8,451.5 L1967.8,456.0 L1971.7,486.2 L1973.5,490.2 L1975.6,484.9 L1978.3,494.1 L1980.9,515.1 L1988.8,546.7 L1994.0,550.6 L2000.6,566.4 L2004.5,557.2 L2008.0,576.9 L2013.7,590.0 L2015.6,633.4 L2024.3,601.9 L2029.5,615.0 L2034.8,596.6 L2038.2,548.0 L2042.7,559.8 L2044.0,549.3 L2049.2,538.8 L2055.8,532.2 L2056.6,578.2 L2058.4,601.9 L2062.4,591.3 L2064.5,600.5 L2067.6,604.5" stroke="#6e6e6e" stroke-width="1.8" fill="none" stroke-linejoin="round" stroke-dasharray="3.5 3.5"/>
<line x1="1666" y1="412.5" x2="1666" y2="797" stroke="#959fa6" stroke-width="2"/>
<circle cx="1666" cy="403" r="9.3" stroke="#7f8a92" stroke-width="1.5" fill="#fefefe"/>
<line x1="1666" y1="401.5" x2="1666" y2="408" stroke="#7f8a92" stroke-width="1.4"/>
<circle cx="1666" cy="398.3" r="0.9" stroke="none" stroke-width="1" fill="#7f8a92"/>
<line x1="506" y1="797" x2="506" y2="813.5" stroke="#7d8b96" stroke-width="1.5"/>
<text x="516.0" y="814.8" font-size="17.5" fill="#4e5b65" textLength="178.0" lengthAdjust="spacingAndGlyphs">Apr-02'22 01:00:00 PM</text>
<line x1="953" y1="797" x2="953" y2="813.5" stroke="#7d8b96" stroke-width="1.5"/>
<text x="963.0" y="814.8" font-size="17.5" fill="#4e5b65" textLength="176.0" lengthAdjust="spacingAndGlyphs">Apr-04'22 07:00:00 PM</text>
<line x1="1398" y1="797" x2="1398" y2="813.5" stroke="#7d8b96" stroke-width="1.5"/>
<text x="1408.0" y="814.8" font-size="17.5" fill="#4e5b65" textLength="177.0" lengthAdjust="spacingAndGlyphs">Apr-07'22 01:00:00 AM</text>
<line x1="1844" y1="797" x2="1844" y2="813.5" stroke="#7d8b96" stroke-width="1.5"/>
<text x="1854.0" y="814.8" font-size="17.5" fill="#4e5b65" textLength="178.0" lengthAdjust="spacingAndGlyphs">Apr-09'22 07:00:00 AM</text>
<rect x="183" y="841" width="2324" height="40.5" fill="#e4e6e9"/>
<line x1="183" y1="840.8" x2="2507" y2="840.8" stroke="#8e9ca5" stroke-width="1.4"/>
<line x1="183" y1="881" x2="2507" y2="881" stroke="#9eadb6" stroke-width="2"/>
<path d="M183.0,871.0 L190.7,871.6 L198.5,871.1 L206.2,870.9 L214.0,871.6 L221.7,871.7 L229.5,871.0 L237.2,870.9 L245.0,871.4 L252.7,871.1 L260.5,870.4 L268.2,870.7 L276.0,871.1 L283.7,870.6 L291.5,870.3 L299.2,870.9 L306.9,871.3 L314.7,870.7 L322.4,870.8 L330.2,871.6 L337.9,871.6 L345.7,870.9 L353.4,871.2 L361.2,871.7 L368.9,871.2 L376.7,870.6 L384.4,871.0 L392.2,871.2 L399.9,870.5 L407.7,870.3 L415.4,871.0 L423.1,871.0 L430.9,870.4 L438.6,870.7 L446.4,871.4 L454.1,871.2 L461.9,870.8 L469.6,871.3 L477.4,871.8 L485.1,871.2 L492.9,870.9 L500.6,871.4 L508.4,871.4 L516.1,870.6 L523.9,870.6 L531.6,871.1 L539.3,870.8 L547.1,870.2 L554.8,870.7 L562.6,871.2 L570.3,870.8 L578.1,870.6 L585.8,871.3 L593.6,871.6 L601.3,871.0 L609.1,871.0 L616.8,871.7 L624.6,871.5 L632.3,870.8 L640.1,871.0 L647.8,871.4 L655.5,870.8 L663.3,870.3 L671.0,870.8 L678.8,871.1 L686.5,870.5 L694.3,870.4 L702.0,871.2 L709.8,871.3 L717.5,870.7 L725.3,871.1 L733.0,871.8 L740.8,871.4 L748.5,870.9 L756.3,871.3 L764.0,871.6 L771.7,870.9 L779.5,870.5 L787.2,871.1 L795.0,871.0 L802.7,870.3 L810.5,870.4 L818.2,871.1 L826.0,870.9 L833.7,870.4 L841.5,871.0 L849.2,871.6 L857.0,871.1 L864.7,870.9 L872.5,871.6 L880.2,871.7 L887.9,871.0 L895.7,870.9 L903.4,871.4 L911.2,871.1 L918.9,870.4 L926.7,870.6 L934.4,871.1 L942.2,870.6 L949.9,870.3 L957.7,870.9 L965.4,871.3 L973.2,870.8 L980.9,870.8 L988.7,871.6 L996.4,871.6 L1004.1,870.9 L1011.9,871.2 L1019.6,871.7 L1027.4,871.2 L1035.1,870.6 L1042.9,871.0 L1050.6,871.2 L1058.4,870.5 L1066.1,870.3 L1073.9,871.0 L1081.6,871.0 L1089.4,870.4 L1097.1,870.7 L1104.9,871.4 L1112.6,871.2 L1120.3,870.8 L1128.1,871.3 L1135.8,871.8 L1143.6,871.2 L1151.3,870.9 L1159.1,871.4 L1166.8,871.4 L1174.6,870.6 L1182.3,870.5 L1190.1,871.1 L1197.8,870.8 L1205.6,870.2 L1213.3,870.7 L1221.1,871.2 L1228.8,870.8 L1236.5,870.6 L1244.3,871.3 L1252.0,871.6 L1259.8,871.0 L1267.5,871.0 L1275.3,871.7 L1283.0,871.5 L1290.8,870.7 L1298.5,870.9 L1306.3,871.4 L1314.0,870.8 L1321.8,870.3 L1329.5,870.8 L1337.3,871.1 L1345.0,870.5 L1352.7,870.4 L1360.5,871.2 L1368.2,871.3 L1376.0,870.8 L1383.7,871.1 L1391.5,871.8 L1399.2,871.4 L1407.0,870.9 L1414.7,871.3 L1422.5,871.6 L1430.2,870.9 L1438.0,870.5 L1445.7,871.1 L1453.5,871.0 L1461.2,870.3 L1468.9,870.4 L1476.7,871.1 L1484.4,870.9 L1492.2,870.5 L1499.9,871.0 L1507.7,871.6 L1515.4,871.1 L1523.2,870.9 L1530.9,871.6 L1538.7,871.7 L1546.4,871.0 L1554.2,870.9 L1561.9,871.4 L1569.7,871.1 L1577.4,870.4 L1585.1,870.6 L1592.9,871.1 L1600.6,870.6 L1608.4,870.3 L1616.1,870.9 L1623.9,871.3 L1631.6,870.8 L1639.4,870.8 L1647.1,871.6 L1654.9,871.6 L1662.6,870.9 L1670.4,871.2 L1678.1,871.7 L1685.9,871.2 L1693.6,870.6 L1701.3,871.0 L1709.1,871.2 L1716.8,870.5 L1724.6,870.3 L1732.3,870.9 L1740.1,871.0 L1747.8,870.4 L1755.6,870.7 L1763.3,871.5 L1771.1,871.2 L1778.8,870.8 L1786.6,871.3 L1794.3,871.8 L1802.1,871.2 L1809.8,870.9 L1817.5,871.4 L1825.3,871.4 L1833.0,870.6 L1840.8,870.5 L1848.5,871.1 L1856.3,870.8 L1864.0,870.2 L1871.8,870.7 L1879.5,871.2 L1887.3,870.8 L1895.0,870.6 L1902.8,871.3 L1910.5,871.6 L1918.3,871.0 L1926.0,871.0 L1933.7,871.7 L1941.5,871.5 L1949.2,870.7 L1957.0,870.9 L1964.7,871.4 L1972.5,870.8 L1980.2,870.3 L1988.0,870.8 L1995.7,871.1 L2003.5,870.5 L2011.2,870.4 L2019.0,871.2 L2026.7,871.3 L2034.5,870.8 L2042.2,871.1 L2049.9,871.8 L2057.7,871.4 L2065.4,870.9 L2073.2,871.3 L2080.9,871.6 L2088.7,870.9 L2096.4,870.5 L2104.2,871.1 L2111.9,871.0 L2119.7,870.3 L2127.4,870.4 L2135.2,871.1 L2142.9,870.9 L2150.7,870.5 L2158.4,871.0 L2166.1,871.6 L2173.9,871.2 L2181.6,870.9 L2189.4,871.6 L2197.1,871.7 L2204.9,871.0 L2212.6,870.9 L2220.4,871.4 L2228.1,871.1 L2235.9,870.4 L2243.6,870.6 L2251.4,871.1 L2259.1,870.6 L2266.9,870.3 L2274.6,870.9 L2282.3,871.3 L2290.1,870.8 L2297.8,870.8 L2305.6,871.6 L2313.3,871.6 L2321.1,870.9 L2328.8,871.2 L2336.6,871.7 L2344.3,871.2 L2352.1,870.6 L2359.8,871.0 L2367.6,871.2 L2375.3,870.5 L2383.1,870.3 L2390.8,870.9 L2398.5,871.0 L2406.3,870.4 L2414.0,870.7 L2421.8,871.5 L2429.5,871.3 L2437.3,870.8 L2445.0,871.3 L2452.8,871.8 L2460.5,871.2 L2468.3,870.8 L2476.0,871.4 L2483.8,871.4 L2491.5,870.6 L2499.3,870.5 L2507.0,871.1" stroke="#d2693c" stroke-width="1.5" fill="none" stroke-linejoin="round"/>
<path d="M183.0,879.0 L960.0,879.0 L985.0,877.3 L1200.0,877.0 L1630.0,877.2 L1900.0,877.2 L1950.0,876.8 L1975.0,876.0 L1987.0,861.5 L2000.0,862.4 L2019.6,859.8 L2043.5,862.8 L2052.2,867.8 L2067.4,870.0 L2078.2,873.2 L2091.3,871.1 L2104.3,871.5 L2107.6,873.2 L2126.1,875.0 L2152.1,875.9 L2169.5,876.9 L2182.6,875.4 L2217.3,875.0 L2239.1,875.4 L2256.5,876.5 L2260.8,874.3 L2271.7,864.6 L2286.9,859.8 L2295.6,862.8 L2299.9,861.3 L2310.8,864.6 L2321.7,862.8 L2326.0,866.3 L2331.4,866.7 L2335.8,848.3 L2340.1,846.5 L2345.6,848.7 L2351.0,845.0 L2357.5,851.1 L2367.3,847.6 L2373.8,847.6 L2380.4,851.1 L2384.7,851.1 L2391.2,854.3 L2399.9,856.5 L2408.6,856.9 L2417.3,858.0 L2421.6,857.6 L2432.5,860.9 L2435.8,865.0 L2443.4,862.8 L2447.7,861.3 L2454.2,862.8 L2460.8,860.2 L2464.0,856.5 L2469.5,857.6 L2478.2,855.4 L2486.9,854.8 L2489.0,858.0 L2491.2,861.3 L2497.7,860.6 L2502.1,861.9" stroke="#55931f" stroke-width="1.6" fill="none" stroke-linejoin="round"/>
<path d="M183.0,879.0 L960.0,879.0 L985.0,877.3 L1200.0,877.0 L1630.0,877.2 L1900.0,877.2 L1950.0,876.8 L1975.0,876.0 L1987.0,861.5 L2000.0,862.4 L2019.6,859.8 L2043.5,862.8 L2052.2,867.8 L2067.4,870.0 L2078.2,873.2 L2091.3,871.1 L2104.3,871.5 L2107.6,873.2 L2126.1,875.0 L2152.1,875.9 L2169.5,876.9 L2182.6,875.4 L2217.3,875.0 L2239.1,875.4 L2256.5,876.5 L2260.8,874.3 L2271.7,864.6 L2286.9,859.8 L2295.6,862.8 L2299.9,861.3 L2310.8,864.6 L2321.7,862.8 L2326.0,866.3 L2331.4,866.7 L2335.8,848.3 L2340.1,846.5 L2345.6,848.7 L2351.0,845.0 L2357.5,851.1 L2367.3,847.6 L2373.8,847.6 L2380.4,851.1 L2384.7,851.1 L2391.2,854.3 L2399.9,856.5 L2408.6,856.9 L2417.3,858.0 L2421.6,857.6 L2432.5,860.9 L2435.8,865.0 L2443.4,862.8 L2447.7,861.3 L2454.2,862.8 L2460.8,860.2 L2464.0,856.5 L2469.5,857.6 L2478.2,855.4 L2486.9,854.8 L2489.0,858.0 L2491.2,861.3 L2497.7,860.6 L2502.1,861.9" stroke="#6e6e6e" stroke-width="1.6" fill="none" stroke-linejoin="round" stroke-dasharray="4 4"/>
<rect x="178.55" y="836.5" width="5" height="48.5" fill="#fefefe" stroke="#8e9ca5" stroke-width="1.5"/>
<rect x="2507.75" y="836.5" width="5" height="48.5" fill="#fefefe" stroke="#8e9ca5" stroke-width="1.5"/>
<line x1="334" y1="882" x2="334" y2="888" stroke="#7d8b96" stroke-width="1.5"/>
<text x="334.0" y="902.0" font-size="13.5" fill="#5d6b75" text-anchor="middle" textLength="36.5" lengthAdjust="spacingAndGlyphs">Apr 02</text>
<line x1="598.5" y1="882" x2="598.5" y2="888" stroke="#7d8b96" stroke-width="1.5"/>
<text x="598.5" y="902.0" font-size="13.5" fill="#5d6b75" text-anchor="middle" textLength="36.5" lengthAdjust="spacingAndGlyphs">Apr 03</text>
<line x1="849.6" y1="882" x2="849.6" y2="888" stroke="#7d8b96" stroke-width="1.5"/>
<text x="849.6" y="902.0" font-size="13.5" fill="#5d6b75" text-anchor="middle" textLength="36.5" lengthAdjust="spacingAndGlyphs">Apr 04</text>
<line x1="1109.6" y1="882" x2="1109.6" y2="888" stroke="#7d8b96" stroke-width="1.5"/>
<text x="1109.6" y="902.0" font-size="13.5" fill="#5d6b75" text-anchor="middle" textLength="36.5" lengthAdjust="spacingAndGlyphs">Apr 05</text>
<line x1="1369.5" y1="882" x2="1369.5" y2="888" stroke="#7d8b96" stroke-width="1.5"/>
<text x="1369.5" y="902.0" font-size="13.5" fill="#5d6b75" text-anchor="middle" textLength="36.5" lengthAdjust="spacingAndGlyphs">Apr 06</text>
<line x1="1629" y1="882" x2="1629" y2="888" stroke="#7d8b96" stroke-width="1.5"/>
<text x="1629.0" y="902.0" font-size="13.5" fill="#5d6b75" text-anchor="middle" textLength="36.5" lengthAdjust="spacingAndGlyphs">Apr 07</text>
<line x1="1888" y1="882" x2="1888" y2="888" stroke="#7d8b96" stroke-width="1.5"/>
<text x="1888.0" y="902.0" font-size="13.5" fill="#5d6b75" text-anchor="middle" textLength="36.5" lengthAdjust="spacingAndGlyphs">Apr 08</text>
<line x1="2141.3" y1="882" x2="2141.3" y2="888" stroke="#7d8b96" stroke-width="1.5"/>
<text x="2141.3" y="902.0" font-size="13.5" fill="#5d6b75" text-anchor="middle" textLength="36.5" lengthAdjust="spacingAndGlyphs">Apr 09</text>
<line x1="2405.3" y1="882" x2="2405.3" y2="888" stroke="#7d8b96" stroke-width="1.5"/>
<text x="2405.3" y="902.0" font-size="13.5" fill="#5d6b75" text-anchor="middle" textLength="36.5" lengthAdjust="spacingAndGlyphs">Apr 10</text>
<text x="170.0" y="961.8" font-size="25" fill="#1d2023" textLength="268.0" lengthAdjust="spacingAndGlyphs">Condenser Back Pressure</text>
<line x1="169" y1="983.5" x2="2513" y2="983.5" stroke="#d2d7db" stroke-width="2"/>
<path d="M2395.5,945.5 H2403 Q2404.5,945.5 2404.5,947 V954 L2394.5,963.5 L2386.5,955.5 Z" stroke="#5f6469" stroke-width="1.7" fill="none" stroke-linejoin="round"/>
<circle cx="2400.2" cy="949.8" r="1.1" stroke="none" stroke-width="1" fill="#5f6469"/>
<line x1="2421" y1="950.5" x2="2438.5" y2="950.5" stroke="#5f6469" stroke-width="1.7"/>
<line x1="2421" y1="958.2" x2="2438.5" y2="958.2" stroke="#5f6469" stroke-width="1.7"/>
<circle cx="2432.8" cy="950.5" r="2.8" stroke="#5f6469" stroke-width="1.7" fill="#fefefe"/>
<circle cx="2427" cy="958.2" r="2.8" stroke="#5f6469" stroke-width="1.7" fill="#fefefe"/>
<path d="M2460.59,948.18 L2461.60,947.86 L2461.45,945.34 L2464.55,945.34 L2464.40,947.86 L2465.41,948.18 L2466.35,948.67 L2468.03,946.78 L2470.22,948.97 L2468.33,950.65 L2468.82,951.59 L2469.14,952.60 L2471.66,952.45 L2471.66,955.55 L2469.14,955.40 L2468.82,956.41 L2468.33,957.35 L2470.22,959.03 L2468.03,961.22 L2466.35,959.33 L2465.41,959.82 L2464.40,960.14 L2464.55,962.66 L2461.45,962.66 L2461.60,960.14 L2460.59,959.82 L2459.65,959.33 L2457.97,961.22 L2455.78,959.03 L2457.67,957.35 L2457.18,956.41 L2456.86,955.40 L2454.34,955.55 L2454.34,952.45 L2456.86,952.60 L2457.18,951.59 L2457.67,950.65 L2455.78,948.97 L2457.97,946.78 L2459.65,948.67 Z" stroke="#5f6469" stroke-width="1.6" fill="none" stroke-linejoin="round"/>
<circle cx="2463" cy="954" r="2.6" stroke="#5f6469" stroke-width="1.6" fill="none"/>
<line x1="2491" y1="948.3" x2="2510" y2="948.3" stroke="#5f6469" stroke-width="1.7"/>
<path d="M2496.5,948 L2497.8,945 H2503.3 L2504.5,948" stroke="#5f6469" stroke-width="1.7" fill="none"/>
<path d="M2493.5,951 V963.5 H2507.5 V951" stroke="#5f6469" stroke-width="1.8" fill="none" stroke-linejoin="round"/>
<line x1="2498.8" y1="954" x2="2498.8" y2="960" stroke="#5f6469" stroke-width="1.6"/>
<line x1="2502.3" y1="954" x2="2502.3" y2="960" stroke="#5f6469" stroke-width="1.6"/>
<path d="M1824,1059.3 H1810.9 L1822.6,1036.3 L1835,1059.3 H1828.8 L1822.8,1048.3" stroke="#7d8b95" stroke-width="1.4" fill="none" stroke-linejoin="round"/>
<circle cx="1863.7" cy="1045.1" r="9.6" stroke="#7d8b95" stroke-width="1.5" fill="none"/>
<line x1="1870.8" y1="1052.2" x2="1877.8" y2="1059.3" stroke="#7d8b95" stroke-width="1.6"/>
<line x1="1897.5" y1="1046.7" x2="1921.5" y2="1046.7" stroke="#7d8b95" stroke-width="1.5"/>
<line x1="1909.4" y1="1034.5" x2="1909.4" y2="1059" stroke="#7d8b95" stroke-width="1.5"/>
<path d="M1901.3,1042.8 L1897.5,1046.7 L1901.3,1050.6" stroke="#7d8b95" stroke-width="1.5" fill="none"/>
<path d="M1917.7,1042.8 L1921.5,1046.7 L1917.7,1050.6" stroke="#7d8b95" stroke-width="1.5" fill="none"/>
<path d="M1905.5,1038.3 L1909.4,1034.5 L1913.3,1038.3" stroke="#7d8b95" stroke-width="1.5" fill="none"/>
<path d="M1905.5,1055.2 L1909.4,1059 L1913.3,1055.2" stroke="#7d8b95" stroke-width="1.5" fill="none"/>
<circle cx="1952.3" cy="1046.7" r="11.7" stroke="#7d8b95" stroke-width="1.5" fill="none"/>
<line x1="1952.3" y1="1045.3" x2="1952.3" y2="1052.9" stroke="#7d8b95" stroke-width="1.6"/>
<circle cx="1952.3" cy="1041.6" r="0.9" stroke="none" stroke-width="1" fill="#7d8b95"/>
<path d="M1990.5,1053 A12.8,9.3 0 1 1 1996.5,1053.7 Q1992,1057.5 1986.5,1057.5 Q1990,1056 1990.5,1053 Z" stroke="#7d8b95" stroke-width="1.5" fill="none" stroke-linejoin="round"/>
<line x1="2028.2" y1="1047.5" x2="2034.1" y2="1047.5" stroke="#7d8b95" stroke-width="1.5"/>
<line x1="2042.7" y1="1047.5" x2="2051.7" y2="1047.5" stroke="#7d8b95" stroke-width="1.5"/>
<line x1="2039.9" y1="1035.8" x2="2039.9" y2="1044.4" stroke="#7d8b95" stroke-width="1.5"/>
<line x1="2039.9" y1="1050.6" x2="2039.9" y2="1059.3" stroke="#7d8b95" stroke-width="1.5"/>
<rect x="2171.2" y="1017.7" width="340.8" height="226" fill="#fefefe" stroke="#8e979d" stroke-width="1.5"/>
<line x1="2171.2" y1="1093.2" x2="2512" y2="1093.2" stroke="#8e979d" stroke-width="1.5"/>
<text x="2189.4" y="1077.0" font-size="17.5" fill="#6b7a84" textLength="59.0" lengthAdjust="spacingAndGlyphs">Sort by:</text>
<text x="2253.0" y="1077.0" font-size="17.5" fill="#2a3b47" font-weight="bold" textLength="81.5" lengthAdjust="spacingAndGlyphs">Tag Name</text>
<path d="M2342,1069.0 L2349,1075.5 L2356,1069.0" stroke="#2a3b47" stroke-width="2.2" fill="none"/>
<line x1="2494" y1="1061.5" x2="2494" y2="1080.5" stroke="#a7b0b6" stroke-width="1.4"/>
<path d="M2489.3,1075.5 L2494,1080.5 L2498.7,1075.5" stroke="#a7b0b6" stroke-width="1.4" fill="none"/>
<rect x="2190.2" y="1111.0" width="8.2" height="34.80000000000001" fill="#4a7fdf"/>
<text x="2207.2" y="1134.6" font-size="16.2" fill="#5b6b76" textLength="178.2" lengthAdjust="spacingAndGlyphs">Condenser Back Pressure</text>
<rect x="2190.2" y="1151.0" width="8.2" height="34.700000000000045" fill="#d95fbd"/>
<text x="2207.2" y="1174.9" font-size="16.2" fill="#5b6b76" textLength="214.3" lengthAdjust="spacingAndGlyphs">Waterbox Differential Pressure</text>
<rect x="2190.2" y="1191.9" width="8.2" height="35.10000000000002" fill="#337a94"/>
<text x="2207.2" y="1215.9" font-size="16.2" fill="#5b6b76" textLength="210.3" lengthAdjust="spacingAndGlyphs">Condensate Dissolved Oxygen</text>
<line x1="285" y1="1455.4" x2="2068" y2="1455.4" stroke="#e9edf0" stroke-width="2"/>
<line x1="285" y1="1415.39" x2="2068" y2="1415.39" stroke="#e9edf0" stroke-width="2"/>
<line x1="285" y1="1375.38" x2="2068" y2="1375.38" stroke="#e9edf0" stroke-width="2"/>
<line x1="285" y1="1335.3700000000001" x2="2068" y2="1335.3700000000001" stroke="#e9edf0" stroke-width="2"/>
<line x1="285" y1="1295.3600000000001" x2="2068" y2="1295.3600000000001" stroke="#e9edf0" stroke-width="2"/>
<line x1="285" y1="1255.3500000000001" x2="2068" y2="1255.3500000000001" stroke="#e9edf0" stroke-width="2"/>
<line x1="285" y1="1215.3400000000001" x2="2068" y2="1215.3400000000001" stroke="#e9edf0" stroke-width="2"/>
<line x1="285" y1="1175.3300000000002" x2="2068" y2="1175.3300000000002" stroke="#e9edf0" stroke-width="2"/>
<line x1="285" y1="1135.3200000000002" x2="2068" y2="1135.3200000000002" stroke="#e9edf0" stroke-width="2"/>
<line x1="285" y1="1095.3100000000002" x2="2068" y2="1095.3100000000002" stroke="#e9edf0" stroke-width="2"/>
<line x1="326.8" y1="1093" x2="326.8" y2="1467.7" stroke="#e9edf0" stroke-width="2"/>
<line x1="454.8" y1="1093" x2="454.8" y2="1467.7" stroke="#e9edf0" stroke-width="2"/>
<line x1="582.9" y1="1093" x2="582.9" y2="1467.7" stroke="#e9edf0" stroke-width="2"/>
<line x1="710.9" y1="1093" x2="710.9" y2="1467.7" stroke="#e9edf0" stroke-width="2"/>
<line x1="839.0" y1="1093" x2="839.0" y2="1467.7" stroke="#e9edf0" stroke-width="2"/>
<line x1="967.0" y1="1093" x2="967.0" y2="1467.7" stroke="#e9edf0" stroke-width="2"/>
<line x1="1095.0" y1="1093" x2="1095.0" y2="1467.7" stroke="#e9edf0" stroke-width="2"/>
<line x1="1223.1" y1="1093" x2="1223.1" y2="1467.7" stroke="#e9edf0" stroke-width="2"/>
<line x1="1351.1" y1="1093" x2="1351.1" y2="1467.7" stroke="#e9edf0" stroke-width="2"/>
<line x1="1479.2" y1="1093" x2="1479.2" y2="1467.7" stroke="#e9edf0" stroke-width="2"/>
<line x1="1607.2" y1="1093" x2="1607.2" y2="1467.7" stroke="#e9edf0" stroke-width="2"/>
<line x1="1735.2" y1="1093" x2="1735.2" y2="1467.7" stroke="#e9edf0" stroke-width="2"/>
<line x1="1863.3" y1="1093" x2="1863.3" y2="1467.7" stroke="#e9edf0" stroke-width="2"/>
<line x1="1991.3" y1="1093" x2="1991.3" y2="1467.7" stroke="#e9edf0" stroke-width="2"/>
<line x1="272" y1="1455.4" x2="285" y2="1455.4" stroke="#7d8b96" stroke-width="1.5"/>
<text x="268.0" y="1461.0" font-size="17.5" fill="#5d6b75" text-anchor="end">2</text>
<line x1="272" y1="1415.39" x2="285" y2="1415.39" stroke="#7d8b96" stroke-width="1.5"/>
<text x="268.0" y="1421.0" font-size="17.5" fill="#5d6b75" text-anchor="end">3</text>
<line x1="272" y1="1375.38" x2="285" y2="1375.38" stroke="#7d8b96" stroke-width="1.5"/>
<text x="268.0" y="1381.0" font-size="17.5" fill="#5d6b75" text-anchor="end">4</text>
<line x1="272" y1="1335.3700000000001" x2="285" y2="1335.3700000000001" stroke="#7d8b96" stroke-width="1.5"/>
<text x="268.0" y="1341.0" font-size="17.5" fill="#5d6b75" text-anchor="end">5</text>
<line x1="272" y1="1295.3600000000001" x2="285" y2="1295.3600000000001" stroke="#7d8b96" stroke-width="1.5"/>
<text x="268.0" y="1301.0" font-size="17.5" fill="#5d6b75" text-anchor="end">6</text>
<line x1="272" y1="1255.3500000000001" x2="285" y2="1255.3500000000001" stroke="#7d8b96" stroke-width="1.5"/>
<text x="268.0" y="1261.0" font-size="17.5" fill="#5d6b75" text-anchor="end">7</text>
<line x1="272" y1="1215.3400000000001" x2="285" y2="1215.3400000000001" stroke="#7d8b96" stroke-width="1.5"/>
<text x="268.0" y="1220.9" font-size="17.5" fill="#5d6b75" text-anchor="end">8</text>
<line x1="272" y1="1175.3300000000002" x2="285" y2="1175.3300000000002" stroke="#7d8b96" stroke-width="1.5"/>
<text x="268.0" y="1180.9" font-size="17.5" fill="#5d6b75" text-anchor="end">9</text>
<line x1="272" y1="1135.3200000000002" x2="285" y2="1135.3200000000002" stroke="#7d8b96" stroke-width="1.5"/>
<text x="268.0" y="1140.9" font-size="17.5" fill="#5d6b75" text-anchor="end">10</text>
<line x1="272" y1="1095.3100000000002" x2="285" y2="1095.3100000000002" stroke="#7d8b96" stroke-width="1.5"/>
<text x="268.0" y="1100.9" font-size="17.5" fill="#5d6b75" text-anchor="end">11</text>
<line x1="284.8" y1="1095" x2="284.8" y2="1468.5" stroke="#7d8b96" stroke-width="1.6"/>
<line x1="285" y1="1467.7" x2="2068" y2="1467.7" stroke="#7d8b96" stroke-width="1.8"/>
<text x="0" y="0" font-size="22" fill="#4d5a64" text-anchor="middle" textLength="58" lengthAdjust="spacingAndGlyphs" transform="translate(222.5,1280) rotate(-90)">[PSIA]</text>
<path d="M285.5,1453.2 L2068.0,1453.2" stroke="#3d7b93" stroke-width="2" fill="none" stroke-linejoin="round"/>
<path d="M285.5,1454.0 L1650.5,1453.0 L1655.4,1447.1 L1668.1,1447.1 L1671.1,1424.3 L1675.9,1420.0 L1680.8,1420.4 L1687.7,1427.2 L1694.5,1420.8 L1702.3,1423.9 L1711.1,1422.7 L1716.0,1424.7 L1719.9,1432.1 L1726.8,1436.4 L1732.6,1438.4 L1739.5,1443.8 L1747.3,1443.8 L1754.1,1440.9 L1757.9,1440.5 L1763.1,1440.7 L1772.3,1445.2 L1779.4,1445.2 L1784.2,1450.5 L1794.7,1449.2 L1805.2,1450.5 L1810.4,1452.6 L1818.3,1448.4 L1873.5,1448.4 L1878.7,1450.5 L1884.0,1449.2 L1890.6,1430.8 L1901.1,1421.6 L1906.3,1424.2 L1912.9,1420.3 L1922.1,1428.1 L1928.7,1425.5 L1936.5,1432.1 L1938.6,1411.1 L1945.7,1394.0 L1949.2,1400.0 L1951.8,1392.7 L1960.2,1401.1 L1966.8,1397.4 L1976.0,1403.7 L1981.2,1403.7 L1986.5,1411.1 L1995.7,1415.0 L2003.5,1415.0 L2011.4,1426.0 L2016.7,1429.4 L2021.9,1424.2 L2028.5,1426.8 L2040.3,1413.7 L2045.6,1413.7 L2050.8,1410.5 L2056.1,1410.5 L2058.7,1420.3 L2067.9,1421.0" stroke="#d55bb9" stroke-width="1.6" fill="none" stroke-linejoin="round"/>
<path d="M284.8,1442.9 L291.9,1445.5 L297.9,1446.7 L303.9,1444.1 L317.0,1428.1 L320.6,1429.7 L330.2,1426.4 L333.0,1423.3 L338.5,1430.0 L344.5,1437.6 L351.7,1435.7 L360.0,1431.2 L370.8,1430.9 L377.9,1430.0 L388.7,1431.7 L399.4,1429.3 L405.4,1428.8 L409.0,1426.2 L420.9,1425.7 L424.5,1430.5 L432.9,1429.7 L442.4,1430.9 L452.0,1430.0 L456.7,1426.9 L461.5,1425.7 L466.3,1431.2 L469.9,1430.5 L473.5,1426.4 L481.8,1424.0 L487.8,1428.1 L496.1,1427.4 L506.9,1430.0 L514.1,1430.9 L528.4,1436.4 L547.5,1440.0 L560.6,1440.0 L564.2,1437.6 L580.9,1437.2 L601.2,1414.9 L606.0,1418.5 L609.6,1419.7 L613.2,1432.1 L622.7,1430.5 L632.3,1413.7 L638.3,1403.7 L643.0,1403.0 L651.4,1413.7 L655.0,1423.3 L659.7,1441.7 L680.0,1440.5 L696.8,1422.6 L712.3,1429.7 L726.6,1430.9 L741.0,1434.0 L754.1,1437.2 L770.8,1437.2 L781.6,1435.2 L794.7,1426.2 L801.9,1420.2 L804.2,1420.9 L805.4,1434.0 L807.8,1442.9 L815.0,1442.9 L829.3,1441.2 L836.5,1446.0 L840.1,1447.7 L844.8,1444.1 L858.0,1443.4 L862.8,1438.8 L867.5,1438.8 L872.3,1442.4 L880.0,1443.1 L889.1,1443.9 L893.9,1443.9 L898.7,1357.7 L911.1,1356.7 L919.0,1362.0 L923.7,1367.9 L930.2,1363.1 L934.5,1350.0 L938.1,1335.2 L942.8,1332.6 L955.5,1339.3 L960.8,1336.2 L969.1,1321.3 L978.0,1309.9 L984.6,1309.4 L993.7,1310.6 L1000.2,1306.3 L1008.0,1305.8 L1014.5,1311.1 L1020.9,1317.8 L1026.4,1334.5 L1030.0,1339.7 L1034.8,1344.8 L1040.8,1348.1 L1047.9,1351.9 L1052.0,1355.5 L1055.8,1363.1 L1059.9,1363.6 L1063.9,1361.2 L1068.2,1388.9 L1077.8,1382.3 L1093.3,1353.6 L1104.1,1332.6 L1108.8,1329.0 L1113.6,1323.0 L1118.4,1322.1 L1123.2,1326.8 L1129.1,1323.7 L1132.7,1315.9 L1137.5,1309.4 L1145.9,1335.0 L1151.8,1337.6 L1155.4,1338.1 L1160.2,1348.3 L1165.0,1351.9 L1170.9,1361.2 L1181.7,1374.4 L1188.8,1369.8 L1194.8,1371.0 L1199.6,1379.1 L1208.0,1373.2 L1213.4,1376.8 L1219.9,1375.1 L1225.9,1373.2 L1231.8,1374.6 L1237.8,1382.3 L1245.7,1383.9 L1248.6,1371.5 L1254.5,1360.3 L1261.7,1349.5 L1273.6,1340.5 L1278.4,1335.7 L1285.6,1326.1 L1293.9,1324.9 L1303.5,1314.2 L1315.4,1297.0 L1321.4,1311.8 L1328.6,1318.2 L1339.3,1334.5 L1347.7,1351.2 L1354.8,1373.9 L1363.2,1390.6 L1370.4,1394.2 L1376.3,1401.8 L1389.5,1404.9 L1402.6,1408.5 L1409.8,1415.0 L1418.1,1417.6 L1427.7,1406.1 L1440.8,1380.3 L1444.4,1362.0 L1451.6,1351.7 L1464.7,1340.5 L1470.0,1338.5 L1474.1,1336.0 L1481.5,1341.8 L1491.3,1345.7 L1501.0,1354.3 L1507.9,1362.7 L1516.7,1363.3 L1525.5,1373.5 L1531.3,1385.6 L1543.1,1397.3 L1557.7,1407.7 L1567.5,1422.3 L1573.3,1428.2 L1577.3,1429.2 L1588.0,1429.2 L1591.9,1424.3 L1596.8,1387.2 L1605.6,1375.4 L1610.5,1352.0 L1615.4,1312.9 L1617.9,1302.1 L1624.2,1319.7 L1631.0,1331.5 L1633.5,1339.3 L1637.8,1308.6 L1644.7,1317.8 L1649.6,1329.5 L1655.4,1333.4 L1665.2,1338.7 L1670.7,1233.7 L1677.9,1222.6 L1683.8,1227.9 L1686.7,1236.7 L1692.6,1203.5 L1698.8,1216.5 L1704.7,1215.2 L1712.1,1228.5 L1720.9,1268.9 L1729.7,1285.5 L1735.6,1306.1 L1743.4,1312.5 L1749.2,1294.3 L1750.0,1295.4 L1763.1,1312.5 L1766.3,1329.1 L1778.9,1327.5 L1788.1,1337.0 L1796.0,1341.4 L1800.4,1345.9 L1806.5,1340.1 L1818.3,1339.6 L1827.5,1336.2 L1838.0,1329.6 L1847.7,1326.5 L1852.5,1330.9 L1864.3,1333.5 L1879.5,1341.4 L1884.8,1313.8 L1886.6,1263.9 L1889.3,1232.4 L1895.8,1221.9 L1903.7,1216.6 L1906.3,1223.2 L1909.0,1218.7 L1915.5,1235.0 L1919.5,1239.5 L1924.7,1232.9 L1930.0,1250.8 L1933.9,1254.7 L1938.6,1137.8 L1943.1,1111.5 L1949.7,1105.0 L1951.8,1096.3 L1956.3,1111.5 L1962.3,1097.1 L1966.0,1103.6 L1973.3,1132.5 L1986.5,1170.6 L1999.6,1185.1 L2009.6,1202.2 L2014.1,1254.7 L2020.6,1232.4 L2028.0,1232.4 L2032.4,1216.6 L2036.9,1187.7 L2041.6,1177.2 L2047.4,1177.2 L2054.3,1173.3 L2056.9,1182.5 L2059.5,1214.0 L2064.0,1221.9 L2067.9,1224.0" stroke="#4a7fdc" stroke-width="2" fill="none" stroke-linejoin="round"/>
<line x1="1666" y1="1083.5" x2="1666" y2="1467.7" stroke="#959fa6" stroke-width="2"/>
<circle cx="1666" cy="1074" r="9.3" stroke="#7f8a92" stroke-width="1.5" fill="#fefefe"/>
<line x1="1666" y1="1072.5" x2="1666" y2="1079" stroke="#7f8a92" stroke-width="1.4"/>
<circle cx="1666" cy="1069.3" r="0.9" stroke="none" stroke-width="1" fill="#7f8a92"/>
<line x1="506" y1="1467.7" x2="506" y2="1484.2" stroke="#7d8b96" stroke-width="1.5"/>
<text x="516.0" y="1485.5" font-size="17.5" fill="#4e5b65" textLength="178.0" lengthAdjust="spacingAndGlyphs">Apr-02'22 01:00:00 PM</text>
<line x1="953" y1="1467.7" x2="953" y2="1484.2" stroke="#7d8b96" stroke-width="1.5"/>
<text x="963.0" y="1485.5" font-size="17.5" fill="#4e5b65" textLength="176.0" lengthAdjust="spacingAndGlyphs">Apr-04'22 07:00:00 PM</text>
<line x1="1398" y1="1467.7" x2="1398" y2="1484.2" stroke="#7d8b96" stroke-width="1.5"/>
<text x="1408.0" y="1485.5" font-size="17.5" fill="#4e5b65" textLength="177.0" lengthAdjust="spacingAndGlyphs">Apr-07'22 01:00:00 AM</text>
<line x1="1844" y1="1467.7" x2="1844" y2="1484.2" stroke="#7d8b96" stroke-width="1.5"/>
<text x="1854.0" y="1485.5" font-size="17.5" fill="#4e5b65" textLength="178.0" lengthAdjust="spacingAndGlyphs">Apr-09'22 07:00:00 AM</text>
</svg>
</body></html>
